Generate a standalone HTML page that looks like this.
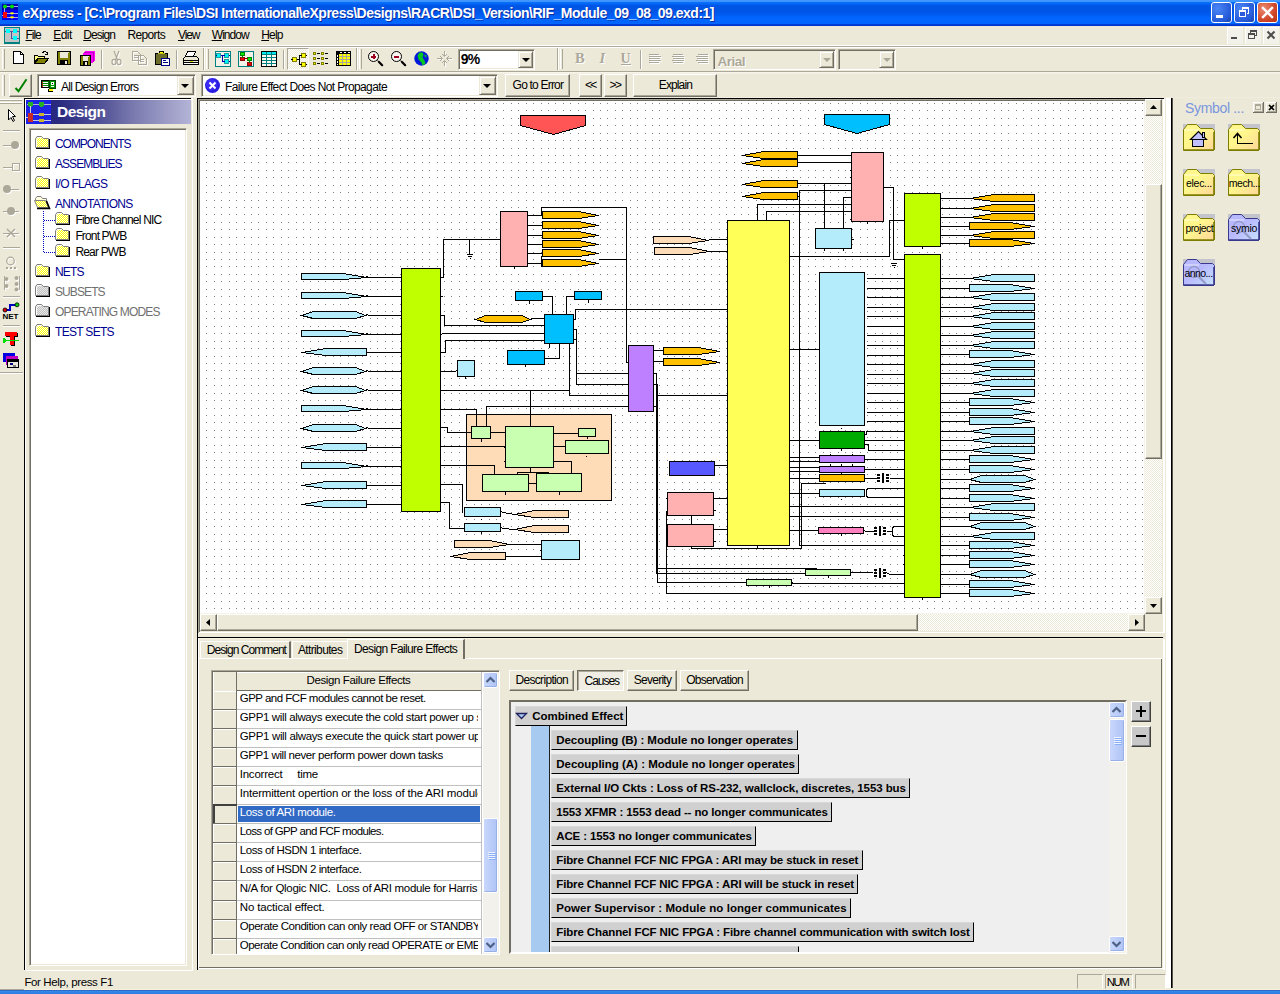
<!DOCTYPE html>
<html><head><meta charset="utf-8"><title>eXpress</title>
<style>
html,body{margin:0;padding:0;}
body{width:1280px;height:994px;overflow:hidden;background:#ECE9D8;font-family:"Liberation Sans",sans-serif;font-size:12px;color:#000;position:relative;}
.abs{position:absolute;}
.t{position:absolute;white-space:nowrap;line-height:1;}
#title{position:absolute;left:0;top:0;width:1280px;height:26px;background:linear-gradient(to bottom,#4297FF 0px,#3C93FF 2px,#0A6EFC 2.5px,#0066F8 4px,#005AEA 5px,#0055E5 6px,#0055E5 11px,#0058EC 13px,#005CF2 15px,#0064FC 17px,#0066FF 18px,#0066FF 23.5px,#0040D8 24.5px,#0030C8 26px);}
#title .txt{left:22px;top:5px;color:#fff;font-weight:bold;font-size:14px;letter-spacing:-0.2px;text-shadow:1px 1px 0 #0A1883;}
.wb{position:absolute;top:2px;width:21px;height:21px;border-radius:3px;border:1px solid #fff;box-sizing:border-box;background:radial-gradient(circle at 30% 30%,#4A86F5,#2459D8 70%,#1941A5);}
.wb.close{background:radial-gradient(circle at 30% 30%,#EB8C71,#D1482A 60%,#B3330F);}
#menubar{position:absolute;left:0;top:25px;width:1280px;height:21px;background:#ECE9D8;}
.menu{position:absolute;top:30px;font-size:12px;line-height:1;white-space:nowrap;}
.menu u{text-decoration:underline;}
.hsep{position:absolute;left:0;width:1280px;height:1px;}
.raisedbtn{position:absolute;box-sizing:border-box;background:#ECE9D8;border:1px solid;border-color:#fff #716F64 #716F64 #fff;box-shadow:inset -1px -1px 0 #ACA899;}
.sunken{position:absolute;box-sizing:border-box;background:#fff;border:1px solid;border-color:#ACA899 #fff #fff #ACA899;box-shadow:inset 1px 1px 0 #716F64, inset -1px -1px 0 #ECE9D8;}
.combo-btn{position:absolute;box-sizing:border-box;background:#ECE9D8;border:1px solid;border-color:#ECE9D8 #716F64 #716F64 #ECE9D8;box-shadow:inset 1px 1px 0 #fff, inset -1px -1px 0 #ACA899;}
.arrow-d{position:absolute;width:0;height:0;border-left:4px solid transparent;border-right:4px solid transparent;border-top:4px solid #000;}
.vsep{position:absolute;width:2px;border-left:1px solid #ACA899;border-right:1px solid #fff;box-sizing:border-box;}
.grip{position:absolute;width:3px;border-left:1px solid #fff;border-right:1px solid #ACA899;box-sizing:border-box;}
.dither{background-image:conic-gradient(#fff 25%,#ECE9D8 0 50%,#fff 0 75%,#ECE9D8 0);background-size:2px 2px;}
.tree{font-size:12px;}
.grid{font-size:11.5px;letter-spacing:-0.1px;}
.tab{box-sizing:border-box;border-right:2px solid #716F64;border-left:1px solid #fff;border-top:1px solid #fff;background:#ECE9D8;}
.tab.act{border-top:1px solid #fff;border-left:1px solid #fff;border-right:2px solid #716F64;}
.subtab{box-sizing:border-box;background:#ECE9D8;border:1px solid;border-color:#fff #716F64 #716F64 #fff;box-shadow:inset -1px -1px 0 #ACA899, inset 1px 1px 0 #ECE9D8;}
.subtab.act{border-color:#716F64 #fff #fff #716F64;box-shadow:inset 1px 1px 0 #ACA899;background:#F0EEE4;}
.cz{box-sizing:border-box;background:#D0D0D0;border:1px solid;border-color:#D8D8D8 #000 #000 #D8D8D8;}
.cb{font-size:12px;font-weight:bold;letter-spacing:-0.05px;}
.xpbtn{box-sizing:border-box;border:1px solid #fff;border-radius:2px;background:linear-gradient(to right,#C9D7FC,#BBCDF9 50%,#B0C4F5);box-shadow:inset -1px -1px 0 #98B0E8;}
.pm{box-sizing:border-box;background:#C8C8C8;border:1px solid;border-color:#fff #404040 #404040 #fff;box-shadow:inset -1px -1px 0 #808080;}

</style></head>
<body>
<div id="title"></div>
<div class="t" style="left:22.5px;top:6.45px;font-size:14px;letter-spacing:-0.498px;font-weight:bold;color:#fff;text-shadow:1px 1px 0 #0A2A9C;">eXpress - [C:\Program Files\DSI International\eXpress\Designs\RACR\DSI_Version\RIF_Module_09_08_09.exd:1]</div>
<div class="wb" style="left:1211px;"></div>
<div class="wb" style="left:1234px;"></div>
<div class="wb close" style="left:1257px;"></div>
<div class="t" style="left:25.5px;top:28.94px;font-size:12px;letter-spacing:-1.023px;"><u>F</u>ile</div>
<div class="t" style="left:53.25px;top:28.94px;font-size:12px;letter-spacing:-0.547px;"><u>E</u>dit</div>
<div class="t" style="left:83.25px;top:28.94px;font-size:12px;letter-spacing:-0.935px;"><u>D</u>esign</div>
<div class="t" style="left:127.5px;top:28.94px;font-size:12px;letter-spacing:-0.647px;">Reports</div>
<div class="t" style="left:178px;top:28.94px;font-size:12px;letter-spacing:-1.137px;"><u>V</u>iew</div>
<div class="t" style="left:211.75px;top:28.94px;font-size:12px;letter-spacing:-0.948px;"><u>W</u>indow</div>
<div class="t" style="left:261.25px;top:28.94px;font-size:12px;letter-spacing:-0.859px;"><u>H</u>elp</div>
<div class="abs" style="left:0px;top:45px;width:1280px;height:1px;background:#fff;"></div>
<div class="abs" style="left:0px;top:46px;width:1280px;height:1px;background:#ACA899;"></div>
<div class="abs" style="left:0px;top:47px;width:1280px;height:1px;background:#fff;"></div>
<div class="grip" style="left:2px;top:49px;width:3px;height:20px;"></div>
<div class="vsep" style="left:101px;top:50px;width:2px;height:19px;"></div>
<div class="vsep" style="left:176px;top:50px;width:2px;height:19px;"></div>
<div class="vsep" style="left:203px;top:48px;width:2px;height:22px;"></div>
<div class="grip" style="left:206px;top:49px;width:3px;height:20px;"></div>
<div class="vsep" style="left:283px;top:50px;width:2px;height:19px;"></div>
<div class="abs dither" style="left:287px;top:48px;width:22px;height:22px;border:1px solid;border-color:#ACA899 #fff #fff #ACA899;box-sizing:border-box;"></div>
<div class="vsep" style="left:356px;top:48px;width:2px;height:22px;"></div>
<div class="grip" style="left:359px;top:49px;width:3px;height:20px;"></div>
<div class="sunken" style="left:458px;top:49px;width:77px;height:21px;"></div>
<div class="t" style="left:460.8px;top:52.45px;font-size:14px;letter-spacing:-0.817px;font-weight:bold;">9%</div>
<div class="combo-btn" style="left:518px;top:51px;width:15px;height:17px;"></div>
<div class="arrow-d" style="left:522px;top:58px;width:0px;height:0px;"></div>
<div class="vsep" style="left:557px;top:48px;width:2px;height:22px;"></div>
<div class="grip" style="left:560px;top:49px;width:3px;height:20px;"></div>
<div class="sunken" style="left:713px;top:49px;width:123px;height:21px;background:#ECE9D8;"></div>
<div class="t" style="left:717.5px;top:54.57px;font-size:13.5px;letter-spacing:-0.503px;font-weight:bold;color:#ACA899;text-shadow:1px 1px 0 #fff;">Arial</div>
<div class="combo-btn" style="left:819px;top:51px;width:15px;height:17px;"></div>
<div class="arrow-d" style="left:823px;top:58px;width:0px;height:0px;border-top-color:#ACA899;"></div>
<div class="sunken" style="left:838px;top:49px;width:58px;height:21px;background:#ECE9D8;"></div>
<div class="combo-btn" style="left:879px;top:51px;width:15px;height:17px;"></div>
<div class="arrow-d" style="left:883px;top:58px;width:0px;height:0px;border-top-color:#ACA899;"></div>
<div class="abs" style="left:0px;top:71px;width:1280px;height:1px;background:#ACA899;"></div>
<div class="abs" style="left:0px;top:72px;width:1280px;height:1px;background:#F8F5EA;"></div>
<div class="abs" style="left:0px;top:73px;width:1280px;height:1px;background:#F2EFE2;"></div>
<div class="grip" style="left:2px;top:75px;width:3px;height:21px;"></div>
<div class="raisedbtn" style="left:9px;top:74px;width:23px;height:23px;"></div>
<div class="sunken" style="left:37px;top:74px;width:159px;height:23px;"></div>
<div class="t" style="left:61px;top:81.04px;font-size:12px;letter-spacing:-0.752px;">All Design Errors</div>
<div class="combo-btn" style="left:177px;top:76px;width:17px;height:19px;"></div>
<div class="arrow-d" style="left:181px;top:84px;width:0px;height:0px;"></div>
<div class="sunken" style="left:201px;top:74px;width:297px;height:23px;"></div>
<div class="t" style="left:225px;top:81.04px;font-size:12px;letter-spacing:-0.623px;">Failure Effect Does Not Propagate</div>
<div class="combo-btn" style="left:479px;top:76px;width:17px;height:19px;"></div>
<div class="arrow-d" style="left:483px;top:84px;width:0px;height:0px;"></div>
<div class="raisedbtn" style="left:505px;top:74px;width:65px;height:23px;"></div>
<div class="t" style="left:512.6px;top:79.34px;font-size:12px;letter-spacing:-0.796px;">Go to Error</div>
<div class="raisedbtn" style="left:579px;top:74px;width:23px;height:23px;"></div>
<div class="t" style="left:584.9px;top:79.34px;font-size:12px;letter-spacing:-1.558px;">&lt;&lt;</div>
<div class="raisedbtn" style="left:604px;top:74px;width:23px;height:23px;"></div>
<div class="t" style="left:609.6px;top:79.34px;font-size:12px;letter-spacing:-1.558px;">&gt;&gt;</div>
<div class="raisedbtn" style="left:633px;top:74px;width:84px;height:23px;"></div>
<div class="t" style="left:658.8px;top:79.34px;font-size:12px;letter-spacing:-0.880px;">Explain</div>
<div class="abs" style="left:0px;top:97px;width:1280px;height:1px;background:#F0EDDE;"></div>
<div class="abs" style="left:24px;top:98px;width:167px;height:1px;background:#000;"></div>
<div class="abs" style="left:24px;top:98px;width:1px;height:872px;background:#000;"></div>
<div class="abs" style="left:25px;top:99px;width:167px;height:1px;background:#fff;"></div>
<div class="abs" style="left:25px;top:99px;width:1px;height:871px;background:#fff;"></div>
<div class="abs" style="left:26px;top:970px;width:167px;height:1px;background:#fff;"></div>
<div class="abs" style="left:192px;top:98px;width:1px;height:872px;background:#fff;"></div>
<div class="abs" style="left:26px;top:100px;width:165px;height:24px;background:linear-gradient(to right,#22227A 0%,#2A2A80 20%,#3C3C8C 32%,#5A5A9C 50%,#7878AE 64%,#8C8CBC 76%,#A0A0C8 88%,#B4B4D8 100%);"></div>
<div class="t" style="left:57px;top:104.38px;font-size:15.5px;letter-spacing:-0.531px;font-weight:bold;color:#fff;">Design</div>
<div class="sunken" style="left:29px;top:128px;width:158px;height:838px;"></div>
<div class="t" style="left:55px;top:138.34px;font-size:12px;letter-spacing:-1.052px;color:#000090;">COMPONENTS</div>
<div class="t" style="left:55px;top:158.34px;font-size:12px;letter-spacing:-0.953px;color:#000090;">ASSEMBLIES</div>
<div class="t" style="left:55px;top:178.34px;font-size:12px;letter-spacing:-0.710px;color:#000090;">I/O FLAGS</div>
<div class="t" style="left:55px;top:198.34px;font-size:12px;letter-spacing:-0.654px;color:#000090;">ANNOTATIONS</div>
<div class="t" style="left:75.4px;top:214.34px;font-size:12px;letter-spacing:-0.781px;">Fibre Channel NIC</div>
<div class="t" style="left:75.4px;top:230.34px;font-size:12px;letter-spacing:-0.854px;">Front PWB</div>
<div class="t" style="left:75.4px;top:246.34px;font-size:12px;letter-spacing:-0.811px;">Rear PWB</div>
<div class="t" style="left:55px;top:266.34px;font-size:12px;letter-spacing:-0.804px;color:#000090;">NETS</div>
<div class="t" style="left:55px;top:286.34px;font-size:12px;letter-spacing:-0.902px;color:#707070;">SUBSETS</div>
<div class="t" style="left:55px;top:306.34px;font-size:12px;letter-spacing:-0.828px;color:#707070;">OPERATING MODES</div>
<div class="t" style="left:55px;top:326.34px;font-size:12px;letter-spacing:-0.693px;color:#000090;">TEST SETS</div>
<div class="abs" style="left:197px;top:98px;width:967px;height:1px;background:#000;"></div>
<div class="abs" style="left:197px;top:99px;width:1px;height:871px;background:#000;"></div>
<div class="abs" style="left:198px;top:99px;width:1px;height:534px;background:#ACA899;"></div>
<div class="abs" style="left:198px;top:99px;width:947px;height:1px;background:#ACA899;"></div>
<div class="abs" style="left:199px;top:100px;width:946px;height:1px;background:#716F64;"></div>
<div class="abs" style="left:199px;top:100px;width:1px;height:532px;background:#716F64;"></div>
<div class="abs" style="left:200px;top:101px;width:945px;height:513px;background:#F6F4EA;overflow:hidden;"><div class="abs" style="left:0;top:0;width:944px;height:512px;background:#fff;"></div><svg width="944" height="512" viewBox="200 101 944 512" shape-rendering="crispEdges" style="position:absolute;left:0;top:0;"><defs><clipPath id="dc"><rect x="206" y="101" width="1" height="512"/><rect x="214" y="101" width="1" height="512"/><rect x="221" y="101" width="1" height="512"/><rect x="229" y="101" width="1" height="512"/><rect x="236" y="101" width="1" height="512"/><rect x="244" y="101" width="1" height="512"/><rect x="251" y="101" width="1" height="512"/><rect x="258" y="101" width="1" height="512"/><rect x="266" y="101" width="1" height="512"/><rect x="273" y="101" width="1" height="512"/><rect x="281" y="101" width="1" height="512"/><rect x="288" y="101" width="1" height="512"/><rect x="296" y="101" width="1" height="512"/><rect x="303" y="101" width="1" height="512"/><rect x="310" y="101" width="1" height="512"/><rect x="318" y="101" width="1" height="512"/><rect x="325" y="101" width="1" height="512"/><rect x="333" y="101" width="1" height="512"/><rect x="340" y="101" width="1" height="512"/><rect x="348" y="101" width="1" height="512"/><rect x="355" y="101" width="1" height="512"/><rect x="362" y="101" width="1" height="512"/><rect x="370" y="101" width="1" height="512"/><rect x="377" y="101" width="1" height="512"/><rect x="385" y="101" width="1" height="512"/><rect x="392" y="101" width="1" height="512"/><rect x="400" y="101" width="1" height="512"/><rect x="407" y="101" width="1" height="512"/><rect x="414" y="101" width="1" height="512"/><rect x="422" y="101" width="1" height="512"/><rect x="429" y="101" width="1" height="512"/><rect x="437" y="101" width="1" height="512"/><rect x="444" y="101" width="1" height="512"/><rect x="451" y="101" width="1" height="512"/><rect x="459" y="101" width="1" height="512"/><rect x="466" y="101" width="1" height="512"/><rect x="474" y="101" width="1" height="512"/><rect x="481" y="101" width="1" height="512"/><rect x="489" y="101" width="1" height="512"/><rect x="496" y="101" width="1" height="512"/><rect x="503" y="101" width="1" height="512"/><rect x="511" y="101" width="1" height="512"/><rect x="518" y="101" width="1" height="512"/><rect x="526" y="101" width="1" height="512"/><rect x="533" y="101" width="1" height="512"/><rect x="541" y="101" width="1" height="512"/><rect x="548" y="101" width="1" height="512"/><rect x="555" y="101" width="1" height="512"/><rect x="563" y="101" width="1" height="512"/><rect x="570" y="101" width="1" height="512"/><rect x="578" y="101" width="1" height="512"/><rect x="585" y="101" width="1" height="512"/><rect x="593" y="101" width="1" height="512"/><rect x="600" y="101" width="1" height="512"/><rect x="607" y="101" width="1" height="512"/><rect x="615" y="101" width="1" height="512"/><rect x="622" y="101" width="1" height="512"/><rect x="630" y="101" width="1" height="512"/><rect x="637" y="101" width="1" height="512"/><rect x="645" y="101" width="1" height="512"/><rect x="652" y="101" width="1" height="512"/><rect x="659" y="101" width="1" height="512"/><rect x="667" y="101" width="1" height="512"/><rect x="674" y="101" width="1" height="512"/><rect x="682" y="101" width="1" height="512"/><rect x="689" y="101" width="1" height="512"/><rect x="697" y="101" width="1" height="512"/><rect x="704" y="101" width="1" height="512"/><rect x="711" y="101" width="1" height="512"/><rect x="719" y="101" width="1" height="512"/><rect x="726" y="101" width="1" height="512"/><rect x="734" y="101" width="1" height="512"/><rect x="741" y="101" width="1" height="512"/><rect x="748" y="101" width="1" height="512"/><rect x="756" y="101" width="1" height="512"/><rect x="763" y="101" width="1" height="512"/><rect x="771" y="101" width="1" height="512"/><rect x="778" y="101" width="1" height="512"/><rect x="786" y="101" width="1" height="512"/><rect x="793" y="101" width="1" height="512"/><rect x="800" y="101" width="1" height="512"/><rect x="808" y="101" width="1" height="512"/><rect x="815" y="101" width="1" height="512"/><rect x="823" y="101" width="1" height="512"/><rect x="830" y="101" width="1" height="512"/><rect x="838" y="101" width="1" height="512"/><rect x="845" y="101" width="1" height="512"/><rect x="852" y="101" width="1" height="512"/><rect x="860" y="101" width="1" height="512"/><rect x="867" y="101" width="1" height="512"/><rect x="875" y="101" width="1" height="512"/><rect x="882" y="101" width="1" height="512"/><rect x="890" y="101" width="1" height="512"/><rect x="897" y="101" width="1" height="512"/><rect x="904" y="101" width="1" height="512"/><rect x="912" y="101" width="1" height="512"/><rect x="919" y="101" width="1" height="512"/><rect x="927" y="101" width="1" height="512"/><rect x="934" y="101" width="1" height="512"/><rect x="942" y="101" width="1" height="512"/><rect x="949" y="101" width="1" height="512"/><rect x="956" y="101" width="1" height="512"/><rect x="964" y="101" width="1" height="512"/><rect x="971" y="101" width="1" height="512"/><rect x="979" y="101" width="1" height="512"/><rect x="986" y="101" width="1" height="512"/><rect x="994" y="101" width="1" height="512"/><rect x="1001" y="101" width="1" height="512"/><rect x="1008" y="101" width="1" height="512"/><rect x="1016" y="101" width="1" height="512"/><rect x="1023" y="101" width="1" height="512"/><rect x="1031" y="101" width="1" height="512"/><rect x="1038" y="101" width="1" height="512"/><rect x="1045" y="101" width="1" height="512"/><rect x="1053" y="101" width="1" height="512"/><rect x="1060" y="101" width="1" height="512"/><rect x="1068" y="101" width="1" height="512"/><rect x="1075" y="101" width="1" height="512"/><rect x="1083" y="101" width="1" height="512"/><rect x="1090" y="101" width="1" height="512"/><rect x="1097" y="101" width="1" height="512"/><rect x="1105" y="101" width="1" height="512"/><rect x="1112" y="101" width="1" height="512"/><rect x="1120" y="101" width="1" height="512"/><rect x="1127" y="101" width="1" height="512"/><rect x="1135" y="101" width="1" height="512"/><rect x="1142" y="101" width="1" height="512"/></clipPath></defs><g clip-path="url(#dc)"><path d="M200,103.5H1145M200,110.5H1145M200,118.5H1145M200,125.5H1145M200,133.5H1145M200,140.5H1145M200,148.5H1145M200,155.5H1145M200,162.5H1145M200,170.5H1145M200,177.5H1145M200,185.5H1145M200,192.5H1145M200,200.5H1145M200,207.5H1145M200,214.5H1145M200,222.5H1145M200,229.5H1145M200,237.5H1145M200,244.5H1145M200,252.5H1145M200,259.5H1145M200,266.5H1145M200,274.5H1145M200,281.5H1145M200,289.5H1145M200,296.5H1145M200,304.5H1145M200,311.5H1145M200,318.5H1145M200,326.5H1145M200,333.5H1145M200,341.5H1145M200,348.5H1145M200,356.5H1145M200,363.5H1145M200,370.5H1145M200,378.5H1145M200,385.5H1145M200,393.5H1145M200,400.5H1145M200,408.5H1145M200,415.5H1145M200,422.5H1145M200,430.5H1145M200,437.5H1145M200,445.5H1145M200,452.5H1145M200,460.5H1145M200,467.5H1145M200,474.5H1145M200,482.5H1145M200,489.5H1145M200,497.5H1145M200,504.5H1145M200,512.5H1145M200,519.5H1145M200,526.5H1145M200,534.5H1145M200,541.5H1145M200,549.5H1145M200,556.5H1145M200,564.5H1145M200,571.5H1145M200,578.5H1145M200,586.5H1145M200,593.5H1145M200,601.5H1145M200,608.5H1145" stroke="#808080" stroke-width="1" fill="none"/></g><path d="M520.5,115.5 L585.5,115.5 L585.5,125.5 L553.5,134.5 L520.5,125.5 Z" fill="#FF5555" stroke="#000" stroke-width="1"/>
<path d="M824.5,114.5 L889.5,114.5 L889.5,124.5 L857,133.5 L824.5,124.5 Z" fill="#00BFFF" stroke="#000" stroke-width="1"/>
<path d="M301.5,273.5 L343.5,273.5 L366.5,277.5 L343.5,279.5 L301.5,279.5 Z" fill="#B4ECFC" stroke="#000" stroke-width="1"/>
<path d="M366.5,276.5 L368.5,277.5 L401.5,277.5" fill="none" stroke="#000" stroke-width="1"/>
<path d="M301.5,292.5 L343.5,292.5 L366.5,296.5 L343.5,298.5 L301.5,298.5 Z" fill="#B4ECFC" stroke="#000" stroke-width="1"/>
<path d="M366.5,295.5 L368.5,296.5 L401.5,296.5" fill="none" stroke="#000" stroke-width="1"/>
<path d="M301.5,315.5 L313.5,311.5 L355.5,311.5 L365.5,315.5 L355.5,318.5 L313.5,318.5 Z" fill="#B4ECFC" stroke="#000" stroke-width="1"/>
<path d="M365.5,315.5 L367.5,314.5 L368.5,315.5 L401.5,315.5" fill="none" stroke="#000" stroke-width="1"/>
<path d="M301.5,330.5 L343.5,330.5 L366.5,334.5 L343.5,336.5 L301.5,336.5 Z" fill="#B4ECFC" stroke="#000" stroke-width="1"/>
<path d="M366.5,333.5 L368.5,334.5 L401.5,334.5" fill="none" stroke="#000" stroke-width="1"/>
<path d="M366.5,348.5 L326.5,348.5 L301.5,352.5 L326.5,355.5 L366.5,355.5 Z" fill="#B4ECFC" stroke="#000" stroke-width="1"/>
<path d="M366.5,352.5 L401.5,352.5" fill="none" stroke="#000" stroke-width="1"/>
<path d="M301.5,371.5 L313.5,367.5 L355.5,367.5 L365.5,371.5 L355.5,374.5 L313.5,374.5 Z" fill="#B4ECFC" stroke="#000" stroke-width="1"/>
<path d="M365.5,371.5 L367.5,370.5 L368.5,371.5 L401.5,371.5" fill="none" stroke="#000" stroke-width="1"/>
<path d="M301.5,390.5 L313.5,386.5 L355.5,386.5 L365.5,390.5 L355.5,393.5 L313.5,393.5 Z" fill="#B4ECFC" stroke="#000" stroke-width="1"/>
<path d="M365.5,390.5 L367.5,389.5 L368.5,390.5 L401.5,390.5" fill="none" stroke="#000" stroke-width="1"/>
<path d="M301.5,405.5 L343.5,405.5 L366.5,409.5 L343.5,411.5 L301.5,411.5 Z" fill="#B4ECFC" stroke="#000" stroke-width="1"/>
<path d="M366.5,408.5 L368.5,409.5 L401.5,409.5" fill="none" stroke="#000" stroke-width="1"/>
<path d="M301.5,428.5 L313.5,424.5 L355.5,424.5 L365.5,428.5 L355.5,431.5 L313.5,431.5 Z" fill="#B4ECFC" stroke="#000" stroke-width="1"/>
<path d="M365.5,428.5 L367.5,427.5 L368.5,428.5 L401.5,428.5" fill="none" stroke="#000" stroke-width="1"/>
<path d="M366.5,443.5 L326.5,443.5 L301.5,447.5 L326.5,450.5 L366.5,450.5 Z" fill="#B4ECFC" stroke="#000" stroke-width="1"/>
<path d="M366.5,447.5 L401.5,447.5" fill="none" stroke="#000" stroke-width="1"/>
<path d="M301.5,462.5 L343.5,462.5 L366.5,466.5 L343.5,468.5 L301.5,468.5 Z" fill="#B4ECFC" stroke="#000" stroke-width="1"/>
<path d="M366.5,465.5 L368.5,466.5 L401.5,466.5" fill="none" stroke="#000" stroke-width="1"/>
<path d="M366.5,481.5 L326.5,481.5 L301.5,485.5 L326.5,488.5 L366.5,488.5 Z" fill="#B4ECFC" stroke="#000" stroke-width="1"/>
<path d="M366.5,485.5 L401.5,485.5" fill="none" stroke="#000" stroke-width="1"/>
<path d="M366.5,500.5 L326.5,500.5 L301.5,504.5 L326.5,507.5 L366.5,507.5 Z" fill="#B4ECFC" stroke="#000" stroke-width="1"/>
<path d="M366.5,504.5 L401.5,504.5" fill="none" stroke="#000" stroke-width="1"/>
<rect x="401.5" y="268.5" width="39" height="243" fill="#BFFF00" stroke="#000"/>
<path d="M440.5,277.5 L443.5,277.5 L443.5,239.5 L500.5,239.5" fill="none" stroke="#000" stroke-width="1"/>
<path d="M469.5,239.5 L469.5,254.5" fill="none" stroke="#000" stroke-width="1"/>
<path d="M466.5,254.5 L472.5,254.5" fill="none" stroke="#000" stroke-width="1"/>
<path d="M467.5,256.5 L471.5,256.5" fill="none" stroke="#000" stroke-width="1"/>
<path d="M469.5,258.5 L470.5,258.5" fill="none" stroke="#000" stroke-width="1"/>
<rect x="500.5" y="211.5" width="27" height="55" fill="#FFB0B0" stroke="#000"/>
<path d="M514.5,266.5 L514.5,268.5" fill="none" stroke="#000" stroke-width="1"/>
<path d="M527.5,215.5 L542.5,215.5" fill="none" stroke="#000" stroke-width="1"/>
<path d="M542.5,211.5 L578.5,211.5 L598.5,215.5 L578.5,218.5 L542.5,218.5 Z" fill="#FFC000" stroke="#000" stroke-width="1"/>
<path d="M527.5,225.5 L542.5,225.5" fill="none" stroke="#000" stroke-width="1"/>
<path d="M542.5,221.5 L578.5,221.5 L598.5,225.5 L578.5,228.5 L542.5,228.5 Z" fill="#FFC000" stroke="#000" stroke-width="1"/>
<path d="M527.5,235.5 L542.5,235.5" fill="none" stroke="#000" stroke-width="1"/>
<path d="M542.5,231.5 L578.5,231.5 L598.5,235.5 L578.5,238.5 L542.5,238.5 Z" fill="#FFC000" stroke="#000" stroke-width="1"/>
<path d="M527.5,244.5 L542.5,244.5" fill="none" stroke="#000" stroke-width="1"/>
<path d="M542.5,240.5 L578.5,240.5 L598.5,244.5 L578.5,247.5 L542.5,247.5 Z" fill="#FFC000" stroke="#000" stroke-width="1"/>
<path d="M527.5,253.5 L542.5,253.5" fill="none" stroke="#000" stroke-width="1"/>
<path d="M542.5,249.5 L578.5,249.5 L598.5,253.5 L578.5,256.5 L542.5,256.5 Z" fill="#FFC000" stroke="#000" stroke-width="1"/>
<path d="M527.5,263.5 L542.5,263.5" fill="none" stroke="#000" stroke-width="1"/>
<path d="M542.5,259.5 L578.5,259.5 L598.5,263.5 L578.5,266.5 L542.5,266.5 Z" fill="#FFC000" stroke="#000" stroke-width="1"/>
<path d="M541.5,215.5 L541.5,207.5 L626.5,207.5 L626.5,362.5 L628.5,362.5" fill="none" stroke="#000" stroke-width="1"/>
<path d="M598.5,259.5 L626.5,259.5" fill="none" stroke="#000" stroke-width="1"/>
<path d="M541.5,255.5 L541.5,266.5" fill="none" stroke="#000" stroke-width="1"/>
<path d="M440.5,296.5 L442.5,296.5" fill="none" stroke="#000" stroke-width="1"/>
<rect x="515.5" y="291.5" width="27" height="9" fill="#00BFFF" stroke="#000"/>
<path d="M529.5,300.5 L529.5,303.5" fill="none" stroke="#000" stroke-width="1"/>
<rect x="574.5" y="291.5" width="27" height="8" fill="#00BFFF" stroke="#000"/>
<path d="M588.5,299.5 L588.5,302.5" fill="none" stroke="#000" stroke-width="1"/>
<path d="M542.5,296.5 L552.5,296.5 L552.5,314.5" fill="none" stroke="#000" stroke-width="1"/>
<path d="M574.5,296.5 L566.5,296.5 L566.5,314.5" fill="none" stroke="#000" stroke-width="1"/>
<path d="M475.5,319.5 L485.5,315.5 L521.5,315.5 L530.5,319.5 L521.5,322.5 L485.5,322.5 Z" fill="#FFC000" stroke="#000" stroke-width="1"/>
<path d="M530.5,318.5 L544.5,318.5" fill="none" stroke="#000" stroke-width="1"/>
<path d="M440.5,315.5 L444.5,315.5 L444.5,325.5 L544.5,325.5" fill="none" stroke="#000" stroke-width="1"/>
<path d="M440.5,334.5 L443.5,333.5 L544.5,333.5" fill="none" stroke="#000" stroke-width="1"/>
<path d="M440.5,352.5 L445.5,352.5 L445.5,340.5 L544.5,340.5" fill="none" stroke="#000" stroke-width="1"/>
<path d="M540.5,318.5 L544.5,318.5" fill="none" stroke="#000" stroke-width="1"/>
<rect x="544.5" y="314.5" width="29" height="29" fill="#00BFFF" stroke="#000"/>
<path d="M549.5,343.5 L549.5,347.5" fill="none" stroke="#000" stroke-width="1"/>
<rect x="507.5" y="350.5" width="37" height="14" fill="#00BFFF" stroke="#000"/>
<path d="M525.5,364.5 L525.5,366.5" fill="none" stroke="#000" stroke-width="1"/>
<path d="M544.5,358.5 L559.5,358.5 L559.5,343.5" fill="none" stroke="#000" stroke-width="1"/>
<rect x="457.5" y="360.5" width="17" height="16" fill="#B4ECFC" stroke="#000"/>
<path d="M465.5,376.5 L465.5,378.5" fill="none" stroke="#000" stroke-width="1"/>
<path d="M440.5,371.5 L455.5,371.5 L457.5,369.5" fill="none" stroke="#000" stroke-width="1"/>
<path d="M573.5,319.5 L575.5,319.5 L575.5,309.5 L727.5,309.5" fill="none" stroke="#000" stroke-width="1"/>
<path d="M573.5,329.5 L576.5,329.5 L576.5,384.5 L628.5,384.5" fill="none" stroke="#000" stroke-width="1"/>
<path d="M573.5,339.5 L576.5,339.5" fill="none" stroke="#000" stroke-width="1"/>
<path d="M576.5,373.5 L628.5,373.5" fill="none" stroke="#000" stroke-width="1"/>
<path d="M569.5,343.5 L569.5,395.5 L628.5,395.5" fill="none" stroke="#000" stroke-width="1"/>
<path d="M440.5,390.5 L569.5,390.5" fill="none" stroke="#000" stroke-width="1"/>
<path d="M626.5,207.5 L626.5,362.5" fill="none" stroke="#000" stroke-width="1"/>
<path d="M530.5,390.5 L530.5,426.5" fill="none" stroke="#000" stroke-width="1"/>
<path d="M440.5,409.5 L476.5,409.5 L476.5,426.5" fill="none" stroke="#000" stroke-width="1"/>
<path d="M628.5,406.5 L486.5,406.5 L486.5,426.5" fill="none" stroke="#000" stroke-width="1"/>
<rect x="628.5" y="345.5" width="25" height="66" fill="#BF80FF" stroke="#000"/>
<path d="M653.5,350.5 L663.5,350.5" fill="none" stroke="#000" stroke-width="1"/>
<path d="M653.5,361.5 L663.5,361.5" fill="none" stroke="#000" stroke-width="1"/>
<path d="M663.5,347.5 L698.5,347.5 L719.5,351.5 L698.5,354.5 L663.5,354.5 Z" fill="#FFC000" stroke="#000" stroke-width="1"/>
<path d="M663.5,358.5 L698.5,358.5 L719.5,362.5 L698.5,365.5 L663.5,365.5 Z" fill="#FFC000" stroke="#000" stroke-width="1"/>
<path d="M653.5,373.5 L656.5,373.5 L656.5,406.5 L653.5,406.5" fill="none" stroke="#000" stroke-width="1"/>
<path d="M653.5,384.5 L657.5,384.5" fill="none" stroke="#000" stroke-width="1"/>
<path d="M657.5,395.5 L727.5,395.5" fill="none" stroke="#000" stroke-width="1"/>
<path d="M657,384 V574" fill="none" stroke="#000" stroke-width="2"/>
<rect x="466.5" y="414.5" width="145" height="86" fill="#FFDCB8" stroke="#000"/>
<path d="M530.5,414.5 L530.5,426.5" fill="none" stroke="#000" stroke-width="1"/>
<path d="M476.5,414.5 L476.5,426.5" fill="none" stroke="#000" stroke-width="1"/>
<path d="M486.5,414.5 L486.5,426.5" fill="none" stroke="#000" stroke-width="1"/>
<rect x="471.5" y="426.5" width="19" height="12" fill="#C8FFB0" stroke="#000"/>
<path d="M481.5,438.5 L481.5,441.5" fill="none" stroke="#000" stroke-width="1"/>
<rect x="505.5" y="426.5" width="48" height="41" fill="#C8FFB0" stroke="#000"/>
<rect x="578.5" y="428.5" width="17" height="8" fill="#C8FFB0" stroke="#000"/>
<path d="M587.5,436.5 L587.5,438.5" fill="none" stroke="#000" stroke-width="1"/>
<rect x="565.5" y="440.5" width="43" height="13" fill="#C8FFB0" stroke="#000"/>
<path d="M586.5,455.5 L586.5,456.5" fill="none" stroke="#000" stroke-width="1"/>
<rect x="482.5" y="474.5" width="46" height="17" fill="#C8FFB0" stroke="#000"/>
<path d="M505.5,491.5 L505.5,494.5" fill="none" stroke="#000" stroke-width="1"/>
<rect x="536.5" y="473.5" width="45" height="18" fill="#C8FFB0" stroke="#000"/>
<path d="M559.5,491.5 L559.5,494.5" fill="none" stroke="#000" stroke-width="1"/>
<path d="M440.5,427.5 L447.5,427.5 L447.5,432.5 L471.5,432.5" fill="none" stroke="#000" stroke-width="1"/>
<path d="M490.5,432.5 L505.5,432.5" fill="none" stroke="#000" stroke-width="1"/>
<path d="M440.5,446.5 L503.5,446.5 L505.5,447.5" fill="none" stroke="#000" stroke-width="1"/>
<path d="M503.5,461.5 L505.5,461.5" fill="none" stroke="#000" stroke-width="1"/>
<path d="M440.5,465.5 L494.5,465.5 L494.5,474.5" fill="none" stroke="#000" stroke-width="1"/>
<path d="M553.5,433.5 L578.5,433.5" fill="none" stroke="#000" stroke-width="1"/>
<path d="M553.5,446.5 L565.5,446.5" fill="none" stroke="#000" stroke-width="1"/>
<path d="M553.5,461.5 L571.5,461.5 L571.5,473.5" fill="none" stroke="#000" stroke-width="1"/>
<path d="M530.5,467.5 L530.5,472.5" fill="none" stroke="#000" stroke-width="1"/>
<path d="M517.5,474.5 L517.5,472.5 L548.5,472.5" fill="none" stroke="#000" stroke-width="1"/>
<path d="M528.5,483.5 L536.5,483.5" fill="none" stroke="#000" stroke-width="1"/>
<path d="M440.5,484.5 L462.5,484.5 L462.5,512.5" fill="none" stroke="#000" stroke-width="1"/>
<path d="M440.5,502.5 L449.5,502.5 L449.5,528.5 L463.5,528.5" fill="none" stroke="#000" stroke-width="1"/>
<rect x="464.5" y="507.5" width="36" height="9" fill="#B4ECFC" stroke="#000"/>
<path d="M481.5,518.5 L481.5,519.5" fill="none" stroke="#000" stroke-width="1"/>
<rect x="464.5" y="523.5" width="36" height="8" fill="#B4ECFC" stroke="#000"/>
<path d="M481.5,531.5 L481.5,533.5" fill="none" stroke="#000" stroke-width="1"/>
<path d="M500.5,511.5 L503.5,512.5 L514.5,514.5" fill="none" stroke="#000" stroke-width="1"/>
<path d="M500.5,527.5 L503.5,528.5 L514.5,529.5" fill="none" stroke="#000" stroke-width="1"/>
<path d="M568.5,510.5 L534.5,510.5 L514.5,514.5 L534.5,517.5 L568.5,517.5 Z" fill="#FFDCB8" stroke="#000" stroke-width="1"/>
<path d="M568.5,525.5 L534.5,525.5 L514.5,529.5 L534.5,532.5 L568.5,532.5 Z" fill="#FFDCB8" stroke="#000" stroke-width="1"/>
<path d="M454.5,540.5 L489.5,540.5 L509.5,544.5 L489.5,547.5 L454.5,547.5 Z" fill="#FFDCB8" stroke="#000" stroke-width="1"/>
<path d="M505.5,552.5 L470.5,552.5 L450.5,556.5 L470.5,559.5 L505.5,559.5 Z" fill="#FFDCB8" stroke="#000" stroke-width="1"/>
<path d="M509.5,544.5 L541.5,544.5" fill="none" stroke="#000" stroke-width="1"/>
<path d="M505.5,556.5 L541.5,556.5" fill="none" stroke="#000" stroke-width="1"/>
<rect x="541.5" y="540.5" width="38" height="19" fill="#B4ECFC" stroke="#000"/>
<path d="M539.5,550.5 L541.5,550.5" fill="none" stroke="#000" stroke-width="1"/>
<path d="M653.5,236.5 L688.5,236.5 L708.5,240.5 L688.5,243.5 L653.5,243.5 Z" fill="#FFDCB8" stroke="#000" stroke-width="1"/>
<path d="M708.5,239.5 L727.5,239.5" fill="none" stroke="#000" stroke-width="1"/>
<path d="M654.5,247.5 L689.5,247.5 L709.5,251.5 L689.5,254.5 L654.5,254.5 Z" fill="#FFDCB8" stroke="#000" stroke-width="1"/>
<path d="M709.5,251.5 L727.5,251.5" fill="none" stroke="#000" stroke-width="1"/>
<rect x="727.5" y="220.5" width="62" height="325" fill="#FFFF58" stroke="#000"/>
<path d="M757.5,545.5 L757.5,547.5" fill="none" stroke="#000" stroke-width="1"/>
<path d="M797.5,151.5 L763.5,151.5 L742.5,155.5 L763.5,158.5 L797.5,158.5 Z" fill="#FFC000" stroke="#000" stroke-width="1"/>
<path d="M797.5,159.5 L763.5,159.5 L742.5,163.5 L763.5,166.5 L797.5,166.5 Z" fill="#FFC000" stroke="#000" stroke-width="1"/>
<path d="M797.5,180.5 L763.5,180.5 L742.5,184.5 L763.5,187.5 L797.5,187.5 Z" fill="#FFC000" stroke="#000" stroke-width="1"/>
<path d="M797.5,192.5 L763.5,192.5 L742.5,196.5 L763.5,199.5 L797.5,199.5 Z" fill="#FFC000" stroke="#000" stroke-width="1"/>
<path d="M797.5,155.5 L851.5,155.5" fill="none" stroke="#000" stroke-width="1"/>
<path d="M797.5,162.5 L851.5,162.5" fill="none" stroke="#000" stroke-width="1"/>
<path d="M797.5,183.5 L851.5,183.5" fill="none" stroke="#000" stroke-width="1"/>
<path d="M797.5,196.5 L799.5,196.5" fill="none" stroke="#000" stroke-width="1"/>
<path d="M851.5,190.5 L799.5,190.5 L799.5,545.5 L904.5,545.5" fill="none" stroke="#000" stroke-width="1"/>
<path d="M851.5,204.5 L757.5,204.5 L757.5,220.5" fill="none" stroke="#000" stroke-width="1"/>
<path d="M851.5,211.5 L766.5,211.5 L766.5,220.5" fill="none" stroke="#000" stroke-width="1"/>
<path d="M824.5,183.5 L824.5,228.5" fill="none" stroke="#000" stroke-width="1"/>
<path d="M851.5,197.5 L843.5,197.5 L843.5,228.5" fill="none" stroke="#000" stroke-width="1"/>
<rect x="851.5" y="152.5" width="32" height="69" fill="#FFB0B0" stroke="#000"/>
<path d="M867.5,221.5 L867.5,223.5" fill="none" stroke="#000" stroke-width="1"/>
<path d="M849.5,170.5 L851.5,170.5" fill="none" stroke="#000" stroke-width="1"/>
<path d="M849.5,177.5 L851.5,177.5" fill="none" stroke="#000" stroke-width="1"/>
<path d="M849.5,219.5 L851.5,219.5" fill="none" stroke="#000" stroke-width="1"/>
<rect x="815.5" y="228.5" width="36" height="20" fill="#B4ECFC" stroke="#000"/>
<path d="M824.5,248.5 L824.5,250.5" fill="none" stroke="#000" stroke-width="1"/>
<path d="M843.5,248.5 L843.5,250.5" fill="none" stroke="#000" stroke-width="1"/>
<path d="M851.5,239.5 L853.5,239.5" fill="none" stroke="#000" stroke-width="1"/>
<path d="M883.5,187.5 L893.5,187.5 L893.5,259.5 L904.5,259.5" fill="none" stroke="#000" stroke-width="1"/>
<path d="M890.5,263.5 L896.5,263.5" fill="none" stroke="#000" stroke-width="1"/>
<path d="M891.5,265.5 L895.5,265.5" fill="none" stroke="#000" stroke-width="1"/>
<path d="M893.5,267.5 L894.5,267.5" fill="none" stroke="#000" stroke-width="1"/>
<path d="M904.5,220.5 L889.5,220.5 L889.5,256.5 L789.5,256.5" fill="none" stroke="#000" stroke-width="1"/>
<rect x="904.5" y="193.5" width="36" height="53" fill="#BFFF00" stroke="#000"/>
<path d="M922.5,246.5 L922.5,248.5" fill="none" stroke="#000" stroke-width="1"/>
<path d="M940.5,198.5 L969.5,198.5" fill="none" stroke="#000" stroke-width="1"/>
<path d="M1034.5,194.5 L994.5,194.5 L969.5,198.5 L994.5,201.5 L1034.5,201.5 Z" fill="#FFC000" stroke="#000" stroke-width="1"/>
<path d="M940.5,208.5 L969.5,208.5" fill="none" stroke="#000" stroke-width="1"/>
<path d="M1034.5,204.5 L994.5,204.5 L969.5,208.5 L994.5,211.5 L1034.5,211.5 Z" fill="#FFC000" stroke="#000" stroke-width="1"/>
<path d="M940.5,217.5 L969.5,217.5" fill="none" stroke="#000" stroke-width="1"/>
<path d="M1034.5,213.5 L994.5,213.5 L969.5,217.5 L994.5,220.5 L1034.5,220.5 Z" fill="#FFC000" stroke="#000" stroke-width="1"/>
<path d="M940.5,226.5 L969.5,226.5" fill="none" stroke="#000" stroke-width="1"/>
<path d="M969.5,222.5 L1009.5,222.5 L1034.5,226.5 L1009.5,229.5 L969.5,229.5 Z" fill="#FFC000" stroke="#000" stroke-width="1"/>
<path d="M940.5,235.5 L969.5,235.5" fill="none" stroke="#000" stroke-width="1"/>
<path d="M1034.5,231.5 L994.5,231.5 L969.5,235.5 L994.5,238.5 L1034.5,238.5 Z" fill="#FFC000" stroke="#000" stroke-width="1"/>
<path d="M940.5,243.5 L969.5,243.5" fill="none" stroke="#000" stroke-width="1"/>
<path d="M969.5,239.5 L1009.5,239.5 L1034.5,243.5 L1009.5,246.5 L969.5,246.5 Z" fill="#FFC000" stroke="#000" stroke-width="1"/>
<rect x="904.5" y="254.5" width="36" height="343" fill="#BFFF00" stroke="#000"/>
<path d="M922.5,597.5 L922.5,599.5" fill="none" stroke="#000" stroke-width="1"/>
<rect x="819.5" y="272.5" width="45" height="153" fill="#B4ECFC" stroke="#000"/>
<path d="M841.5,427.5 L841.5,428.5" fill="none" stroke="#000" stroke-width="1"/>
<path d="M789.5,349.5 L819.5,349.5" fill="none" stroke="#000" stroke-width="1"/>
<path d="M866.5,278.5 L904.5,278.5" fill="none" stroke="#000" stroke-width="1"/>
<path d="M866.5,288.5 L904.5,288.5" fill="none" stroke="#000" stroke-width="1"/>
<path d="M866.5,297.5 L904.5,297.5" fill="none" stroke="#000" stroke-width="1"/>
<path d="M866.5,307.5 L904.5,307.5" fill="none" stroke="#000" stroke-width="1"/>
<path d="M866.5,316.5 L904.5,316.5" fill="none" stroke="#000" stroke-width="1"/>
<path d="M866.5,326.5 L904.5,326.5" fill="none" stroke="#000" stroke-width="1"/>
<path d="M866.5,335.5 L904.5,335.5" fill="none" stroke="#000" stroke-width="1"/>
<path d="M866.5,345.5 L904.5,345.5" fill="none" stroke="#000" stroke-width="1"/>
<path d="M866.5,355.5 L904.5,355.5" fill="none" stroke="#000" stroke-width="1"/>
<path d="M866.5,364.5 L904.5,364.5" fill="none" stroke="#000" stroke-width="1"/>
<path d="M866.5,374.5 L904.5,374.5" fill="none" stroke="#000" stroke-width="1"/>
<path d="M866.5,383.5 L904.5,383.5" fill="none" stroke="#000" stroke-width="1"/>
<path d="M866.5,393.5 L904.5,393.5" fill="none" stroke="#000" stroke-width="1"/>
<path d="M866.5,402.5 L904.5,402.5" fill="none" stroke="#000" stroke-width="1"/>
<path d="M866.5,412.5 L904.5,412.5" fill="none" stroke="#000" stroke-width="1"/>
<path d="M866.5,421.5 L904.5,421.5" fill="none" stroke="#000" stroke-width="1"/>
<path d="M940.5,278.5 L969.5,278.5" fill="none" stroke="#000" stroke-width="1"/>
<path d="M1034.5,274.5 L994.5,274.5 L969.5,278.5 L994.5,281.5 L1034.5,281.5 Z" fill="#B4ECFC" stroke="#000" stroke-width="1"/>
<path d="M940.5,288.5 L969.5,288.5" fill="none" stroke="#000" stroke-width="1"/>
<path d="M969.5,284.5 L1009.5,284.5 L1034.5,288.5 L1009.5,291.5 L969.5,291.5 Z" fill="#B4ECFC" stroke="#000" stroke-width="1"/>
<path d="M940.5,297.5 L969.5,297.5" fill="none" stroke="#000" stroke-width="1"/>
<path d="M1034.5,293.5 L994.5,293.5 L969.5,297.5 L994.5,300.5 L1034.5,300.5 Z" fill="#B4ECFC" stroke="#000" stroke-width="1"/>
<path d="M940.5,307.5 L969.5,307.5" fill="none" stroke="#000" stroke-width="1"/>
<path d="M1034.5,303.5 L994.5,303.5 L969.5,307.5 L994.5,310.5 L1034.5,310.5 Z" fill="#B4ECFC" stroke="#000" stroke-width="1"/>
<path d="M940.5,316.5 L969.5,316.5" fill="none" stroke="#000" stroke-width="1"/>
<path d="M1034.5,312.5 L994.5,312.5 L969.5,316.5 L994.5,319.5 L1034.5,319.5 Z" fill="#B4ECFC" stroke="#000" stroke-width="1"/>
<path d="M940.5,326.5 L969.5,326.5" fill="none" stroke="#000" stroke-width="1"/>
<path d="M1034.5,322.5 L994.5,322.5 L969.5,326.5 L994.5,329.5 L1034.5,329.5 Z" fill="#B4ECFC" stroke="#000" stroke-width="1"/>
<path d="M940.5,335.5 L969.5,335.5" fill="none" stroke="#000" stroke-width="1"/>
<path d="M1034.5,331.5 L994.5,331.5 L969.5,335.5 L994.5,338.5 L1034.5,338.5 Z" fill="#B4ECFC" stroke="#000" stroke-width="1"/>
<path d="M940.5,345.5 L969.5,345.5" fill="none" stroke="#000" stroke-width="1"/>
<path d="M1034.5,341.5 L994.5,341.5 L969.5,345.5 L994.5,348.5 L1034.5,348.5 Z" fill="#B4ECFC" stroke="#000" stroke-width="1"/>
<path d="M940.5,354.5 L969.5,354.5" fill="none" stroke="#000" stroke-width="1"/>
<path d="M969.5,350.5 L1009.5,350.5 L1034.5,354.5 L1009.5,357.5 L969.5,357.5 Z" fill="#B4ECFC" stroke="#000" stroke-width="1"/>
<path d="M940.5,364.5 L969.5,364.5" fill="none" stroke="#000" stroke-width="1"/>
<path d="M1034.5,360.5 L994.5,360.5 L969.5,364.5 L994.5,367.5 L1034.5,367.5 Z" fill="#B4ECFC" stroke="#000" stroke-width="1"/>
<path d="M940.5,373.5 L969.5,373.5" fill="none" stroke="#000" stroke-width="1"/>
<path d="M1034.5,369.5 L994.5,369.5 L969.5,373.5 L994.5,376.5 L1034.5,376.5 Z" fill="#B4ECFC" stroke="#000" stroke-width="1"/>
<path d="M940.5,383.5 L969.5,383.5" fill="none" stroke="#000" stroke-width="1"/>
<path d="M1034.5,379.5 L994.5,379.5 L969.5,383.5 L994.5,386.5 L1034.5,386.5 Z" fill="#B4ECFC" stroke="#000" stroke-width="1"/>
<path d="M940.5,393.5 L969.5,393.5" fill="none" stroke="#000" stroke-width="1"/>
<path d="M1034.5,389.5 L994.5,389.5 L969.5,393.5 L994.5,396.5 L1034.5,396.5 Z" fill="#B4ECFC" stroke="#000" stroke-width="1"/>
<path d="M940.5,402.5 L969.5,402.5" fill="none" stroke="#000" stroke-width="1"/>
<path d="M969.5,398.5 L1009.5,398.5 L1034.5,402.5 L1009.5,405.5 L969.5,405.5 Z" fill="#B4ECFC" stroke="#000" stroke-width="1"/>
<path d="M940.5,412.5 L969.5,412.5" fill="none" stroke="#000" stroke-width="1"/>
<path d="M969.5,408.5 L1009.5,408.5 L1034.5,412.5 L1009.5,415.5 L969.5,415.5 Z" fill="#B4ECFC" stroke="#000" stroke-width="1"/>
<path d="M940.5,421.5 L969.5,421.5" fill="none" stroke="#000" stroke-width="1"/>
<path d="M969.5,417.5 L1009.5,417.5 L1034.5,421.5 L1009.5,424.5 L969.5,424.5 Z" fill="#B4ECFC" stroke="#000" stroke-width="1"/>
<path d="M940.5,431.5 L969.5,431.5" fill="none" stroke="#000" stroke-width="1"/>
<path d="M1034.5,427.5 L994.5,427.5 L969.5,431.5 L994.5,434.5 L1034.5,434.5 Z" fill="#B4ECFC" stroke="#000" stroke-width="1"/>
<path d="M940.5,440.5 L969.5,440.5" fill="none" stroke="#000" stroke-width="1"/>
<path d="M1034.5,436.5 L994.5,436.5 L969.5,440.5 L994.5,443.5 L1034.5,443.5 Z" fill="#B4ECFC" stroke="#000" stroke-width="1"/>
<path d="M940.5,450.5 L969.5,450.5" fill="none" stroke="#000" stroke-width="1"/>
<path d="M1034.5,446.5 L994.5,446.5 L969.5,450.5 L994.5,453.5 L1034.5,453.5 Z" fill="#B4ECFC" stroke="#000" stroke-width="1"/>
<path d="M940.5,459.5 L969.5,459.5" fill="none" stroke="#000" stroke-width="1"/>
<path d="M969.5,455.5 L1009.5,455.5 L1034.5,459.5 L1009.5,462.5 L969.5,462.5 Z" fill="#B4ECFC" stroke="#000" stroke-width="1"/>
<path d="M940.5,469.5 L969.5,469.5" fill="none" stroke="#000" stroke-width="1"/>
<path d="M969.5,465.5 L1009.5,465.5 L1034.5,469.5 L1009.5,472.5 L969.5,472.5 Z" fill="#B4ECFC" stroke="#000" stroke-width="1"/>
<path d="M940.5,479.5 L969.5,479.5" fill="none" stroke="#000" stroke-width="1"/>
<path d="M969.5,479.5 L981.5,475.5 L1024.5,475.5 L1034.5,479.5 L1024.5,482.5 L981.5,482.5 Z" fill="#B4ECFC" stroke="#000" stroke-width="1"/>
<path d="M940.5,488.5 L969.5,488.5" fill="none" stroke="#000" stroke-width="1"/>
<path d="M969.5,484.5 L1009.5,484.5 L1034.5,488.5 L1009.5,491.5 L969.5,491.5 Z" fill="#B4ECFC" stroke="#000" stroke-width="1"/>
<path d="M940.5,498.5 L969.5,498.5" fill="none" stroke="#000" stroke-width="1"/>
<path d="M969.5,494.5 L1009.5,494.5 L1034.5,498.5 L1009.5,501.5 L969.5,501.5 Z" fill="#B4ECFC" stroke="#000" stroke-width="1"/>
<path d="M940.5,507.5 L969.5,507.5" fill="none" stroke="#000" stroke-width="1"/>
<path d="M1034.5,503.5 L994.5,503.5 L969.5,507.5 L994.5,510.5 L1034.5,510.5 Z" fill="#B4ECFC" stroke="#000" stroke-width="1"/>
<path d="M940.5,517.5 L969.5,517.5" fill="none" stroke="#000" stroke-width="1"/>
<path d="M969.5,513.5 L1009.5,513.5 L1034.5,517.5 L1009.5,520.5 L969.5,520.5 Z" fill="#B4ECFC" stroke="#000" stroke-width="1"/>
<path d="M940.5,526.5 L969.5,526.5" fill="none" stroke="#000" stroke-width="1"/>
<path d="M969.5,526.5 L981.5,522.5 L1024.5,522.5 L1034.5,526.5 L1024.5,529.5 L981.5,529.5 Z" fill="#B4ECFC" stroke="#000" stroke-width="1"/>
<path d="M940.5,536.5 L969.5,536.5" fill="none" stroke="#000" stroke-width="1"/>
<path d="M1034.5,532.5 L994.5,532.5 L969.5,536.5 L994.5,539.5 L1034.5,539.5 Z" fill="#B4ECFC" stroke="#000" stroke-width="1"/>
<path d="M940.5,545.5 L969.5,545.5" fill="none" stroke="#000" stroke-width="1"/>
<path d="M969.5,541.5 L1009.5,541.5 L1034.5,545.5 L1009.5,548.5 L969.5,548.5 Z" fill="#B4ECFC" stroke="#000" stroke-width="1"/>
<path d="M940.5,555.5 L969.5,555.5" fill="none" stroke="#000" stroke-width="1"/>
<path d="M969.5,551.5 L1009.5,551.5 L1034.5,555.5 L1009.5,558.5 L969.5,558.5 Z" fill="#B4ECFC" stroke="#000" stroke-width="1"/>
<path d="M940.5,564.5 L969.5,564.5" fill="none" stroke="#000" stroke-width="1"/>
<path d="M969.5,560.5 L1009.5,560.5 L1034.5,564.5 L1009.5,567.5 L969.5,567.5 Z" fill="#B4ECFC" stroke="#000" stroke-width="1"/>
<path d="M940.5,574.5 L969.5,574.5" fill="none" stroke="#000" stroke-width="1"/>
<path d="M969.5,574.5 L981.5,570.5 L1024.5,570.5 L1034.5,574.5 L1024.5,577.5 L981.5,577.5 Z" fill="#B4ECFC" stroke="#000" stroke-width="1"/>
<path d="M940.5,584.5 L969.5,584.5" fill="none" stroke="#000" stroke-width="1"/>
<path d="M969.5,580.5 L1009.5,580.5 L1034.5,584.5 L1009.5,587.5 L969.5,587.5 Z" fill="#B4ECFC" stroke="#000" stroke-width="1"/>
<path d="M940.5,593.5 L969.5,593.5" fill="none" stroke="#000" stroke-width="1"/>
<path d="M969.5,589.5 L1009.5,589.5 L1034.5,593.5 L1009.5,596.5 L969.5,596.5 Z" fill="#B4ECFC" stroke="#000" stroke-width="1"/>
<rect x="819.5" y="431.5" width="45" height="17" fill="#00AA00" stroke="#000"/>
<path d="M841.5,448.5 L841.5,450.5" fill="none" stroke="#000" stroke-width="1"/>
<path d="M789.5,440.5 L819.5,440.5" fill="none" stroke="#000" stroke-width="1"/>
<path d="M864.5,434.5 L866.5,434.5 L866.5,431.5 L904.5,431.5" fill="none" stroke="#000" stroke-width="1"/>
<path d="M864.5,440.5 L904.5,440.5" fill="none" stroke="#000" stroke-width="1"/>
<path d="M864.5,444.5 L868.5,444.5 L868.5,450.5 L904.5,450.5" fill="none" stroke="#000" stroke-width="1"/>
<rect x="819.5" y="455.5" width="45" height="7" fill="#BF80FF" stroke="#000"/>
<rect x="819.5" y="466.5" width="45" height="6" fill="#BF80FF" stroke="#000"/>
<rect x="819.5" y="474.5" width="45" height="7" fill="#FFC000" stroke="#000"/>
<path d="M830.5,453.5 L830.5,455.5" fill="none" stroke="#000" stroke-width="1"/>
<path d="M830.5,463.5 L830.5,466.5" fill="none" stroke="#000" stroke-width="1"/>
<path d="M852.5,453.5 L852.5,455.5" fill="none" stroke="#000" stroke-width="1"/>
<path d="M852.5,463.5 L852.5,466.5" fill="none" stroke="#000" stroke-width="1"/>
<path d="M841.5,463.5 L841.5,466.5" fill="none" stroke="#000" stroke-width="1"/>
<path d="M841.5,472.5 L841.5,474.5" fill="none" stroke="#000" stroke-width="1"/>
<path d="M789.5,457.5 L819.5,457.5" fill="none" stroke="#000" stroke-width="1"/>
<path d="M789.5,461.5 L819.5,461.5" fill="none" stroke="#000" stroke-width="1"/>
<path d="M789.5,467.5 L819.5,467.5" fill="none" stroke="#000" stroke-width="1"/>
<path d="M789.5,471.5 L819.5,471.5" fill="none" stroke="#000" stroke-width="1"/>
<path d="M789.5,478.5 L819.5,478.5" fill="none" stroke="#000" stroke-width="1"/>
<path d="M864.5,459.5 L904.5,459.5" fill="none" stroke="#000" stroke-width="1"/>
<path d="M864.5,469.5 L904.5,469.5" fill="none" stroke="#000" stroke-width="1"/>
<path d="M864.5,478.5 L878.5,478.5" fill="none" stroke="#000" stroke-width="1"/>
<path d="M889.5,478.5 L904.5,478.5" fill="none" stroke="#000" stroke-width="1"/>
<rect x="819.5" y="489.5" width="45" height="7" fill="#B4ECFC" stroke="#000"/>
<path d="M841.5,498.5 L841.5,499.5" fill="none" stroke="#000" stroke-width="1"/>
<path d="M789.5,493.5 L819.5,493.5" fill="none" stroke="#000" stroke-width="1"/>
<path d="M904.5,488.5 L867.5,488.5 L866.5,490.5 L866.5,495.5 L867.5,497.5 L904.5,497.5" fill="none" stroke="#000" stroke-width="1"/>
<path d="M789.5,506.5 L904.5,506.5" fill="none" stroke="#000" stroke-width="1"/>
<path d="M789.5,516.5 L904.5,516.5" fill="none" stroke="#000" stroke-width="1"/>
<path d="M789.5,530.5 L818.5,530.5" fill="none" stroke="#000" stroke-width="1"/>
<rect x="818.5" y="527.5" width="45" height="6" fill="#FF80C0" stroke="#000"/>
<path d="M841.5,533.5 L841.5,535.5" fill="none" stroke="#000" stroke-width="1"/>
<path d="M863.5,530.5 L866.5,531.5 L874.5,531.5" fill="none" stroke="#000" stroke-width="1"/>
<path d="M904.5,526.5 L893.5,526.5 L892.5,528.5 L892.5,534.5 L893.5,536.5 L904.5,536.5" fill="none" stroke="#000" stroke-width="1"/>
<path d="M886.5,531.5 L892.5,531.5" fill="none" stroke="#000" stroke-width="1"/>
<path d="M902.5,555.5 L904.5,555.5" fill="none" stroke="#000" stroke-width="1"/>
<path d="M902.5,564.5 L904.5,564.5" fill="none" stroke="#000" stroke-width="1"/>
<rect x="877" y="474" width="3" height="2" fill="#000"/>
<rect x="877" y="477" width="3" height="2" fill="#000"/>
<rect x="877" y="480" width="3" height="2" fill="#000"/>
<rect x="886" y="474" width="3" height="2" fill="#000"/>
<rect x="886" y="477" width="3" height="2" fill="#000"/>
<rect x="886" y="480" width="3" height="2" fill="#000"/>
<rect x="882" y="473" width="2" height="10" fill="#000"/>
<rect x="874" y="527" width="3" height="2" fill="#000"/>
<rect x="874" y="530" width="3" height="2" fill="#000"/>
<rect x="874" y="533" width="3" height="2" fill="#000"/>
<rect x="883" y="527" width="3" height="2" fill="#000"/>
<rect x="883" y="530" width="3" height="2" fill="#000"/>
<rect x="883" y="533" width="3" height="2" fill="#000"/>
<rect x="879" y="526" width="2" height="10" fill="#000"/>
<rect x="874" y="569" width="3" height="2" fill="#000"/>
<rect x="874" y="572" width="3" height="2" fill="#000"/>
<rect x="874" y="575" width="3" height="2" fill="#000"/>
<rect x="883" y="569" width="3" height="2" fill="#000"/>
<rect x="883" y="572" width="3" height="2" fill="#000"/>
<rect x="883" y="575" width="3" height="2" fill="#000"/>
<rect x="879" y="568" width="2" height="10" fill="#000"/>
<rect x="669.5" y="461.5" width="45" height="14" fill="#5858FF" stroke="#000"/>
<path d="M714.5,465.5 L727.5,465.5" fill="none" stroke="#000" stroke-width="1"/>
<rect x="667.5" y="492.5" width="46" height="23" fill="#FFB0B0" stroke="#000"/>
<path d="M713.5,498.5 L727.5,498.5" fill="none" stroke="#000" stroke-width="1"/>
<rect x="667.5" y="524.5" width="46" height="22" fill="#FFB0B0" stroke="#000"/>
<path d="M713.5,529.5 L727.5,529.5" fill="none" stroke="#000" stroke-width="1"/>
<path d="M691.5,515.5 L691.5,524.5" fill="none" stroke="#000" stroke-width="1"/>
<path d="M665.5,498.5 L667.5,498.5" fill="none" stroke="#000" stroke-width="1"/>
<path d="M665.5,535.5 L667.5,535.5" fill="none" stroke="#000" stroke-width="1"/>
<path d="M713.5,510.5 L715.5,510.5" fill="none" stroke="#000" stroke-width="1"/>
<path d="M713.5,541.5 L715.5,541.5" fill="none" stroke="#000" stroke-width="1"/>
<path d="M666.5,510.5 L666.5,593.5 L904.5,593.5" fill="none" stroke="#000" stroke-width="1"/>
<path d="M691.5,546.5 L691.5,548.5 L801.5,548.5 L801.5,483.5 L825.5,483.5" fill="none" stroke="#000" stroke-width="1"/>
<rect x="805.5" y="569.5" width="45" height="6" fill="#C8FFB0" stroke="#000"/>
<path d="M828.5,575.5 L828.5,577.5" fill="none" stroke="#000" stroke-width="1"/>
<rect x="746.5" y="579.5" width="45" height="6" fill="#C8FFB0" stroke="#000"/>
<path d="M769.5,585.5 L769.5,587.5" fill="none" stroke="#000" stroke-width="1"/>
<path d="M657.5,568.5 L816.5,568.5" fill="none" stroke="#000" stroke-width="1"/>
<path d="M657.5,573.5 L805.5,573.5" fill="none" stroke="#000" stroke-width="1"/>
<path d="M657.5,573.5 L657.5,582.5 L746.5,582.5" fill="none" stroke="#000" stroke-width="1"/>
<path d="M791.5,582.5 L793.5,583.5 L904.5,583.5" fill="none" stroke="#000" stroke-width="1"/>
<path d="M850.5,572.5 L872.5,572.5" fill="none" stroke="#000" stroke-width="1"/>
<path d="M886.5,572.5 L889.5,574.5 L904.5,574.5" fill="none" stroke="#000" stroke-width="1"/></svg></div>
<div class="abs dither" style="left:1145px;top:99px;width:17px;height:515px;"></div>
<div class="raisedbtn" style="left:1145px;top:99px;width:17px;height:17px;"></div>
<div class="raisedbtn" style="left:1145px;top:597px;width:17px;height:17px;"></div>
<div class="raisedbtn" style="left:1145px;top:184px;width:17px;height:275px;"></div>
<div class="abs dither" style="left:200px;top:614px;width:945px;height:17px;"></div>
<div class="raisedbtn" style="left:200px;top:614px;width:17px;height:17px;"></div>
<div class="raisedbtn" style="left:1128px;top:614px;width:17px;height:17px;"></div>
<div class="raisedbtn" style="left:217px;top:614px;width:701px;height:17px;"></div>
<div class="abs" style="left:199px;top:632px;width:966px;height:1px;background:#fff;"></div>
<div class="abs" style="left:1163px;top:99px;width:2px;height:534px;background:#fff;"></div>
<div class="abs" style="left:197px;top:637px;width:966px;height:1px;background:#000;"></div>
<div class="abs" style="left:199px;top:638px;width:964px;height:1px;background:#F8F4E4;"></div>
<div class="abs" style="left:197px;top:637px;width:1px;height:332px;background:#000;"></div>
<div class="abs" style="left:198px;top:638px;width:1px;height:330px;background:#fff;"></div>
<div class="abs" style="left:199px;top:968px;width:964px;height:1px;background:#fff;"></div>
<div class="abs" style="left:1163px;top:639px;width:2px;height:331px;background:#fff;"></div>
<div class="abs" style="left:199px;top:658px;width:963px;height:1px;background:#fff;"></div>
<div class="abs tab" style="left:200px;top:641px;width:91px;height:17px;"></div>
<div class="abs tab" style="left:292px;top:641px;width:55px;height:17px;border-right:none;"></div>
<div class="abs tab act" style="left:347px;top:639px;width:118px;height:20px;"></div>
<div class="t" style="left:206.8px;top:644.34px;font-size:12px;letter-spacing:-0.965px;">Design Comment</div>
<div class="t" style="left:298px;top:644.34px;font-size:12px;letter-spacing:-0.645px;">Attributes</div>
<div class="t" style="left:354px;top:642.54px;font-size:12px;letter-spacing:-0.633px;">Design Failure Effects</div>
<div class="abs" style="left:1161px;top:659px;width:1px;height:309px;background:#716F64;"></div>
<div class="abs" style="left:199px;top:967px;width:963px;height:1px;background:#716F64;"></div>
<div class="abs" style="left:211px;top:670px;width:289px;height:285px;background:#fff;border:1px solid;border-color:#ACA899 #fff #fff #ACA899;box-shadow:inset 1px 1px 0 #716F64;box-sizing:border-box;"></div>
<div class="abs" style="left:213px;top:672px;width:269px;height:19px;background:#ECE9D8;border-bottom:1px solid #716F64;border-top:1px solid #fff;box-sizing:border-box;"></div>
<div class="abs" style="left:213px;top:672px;width:24px;height:282px;background:#ECE9D8;border-right:1px solid #716F64;border-left:1px solid #fff;box-sizing:border-box;"></div>
<div class="t" style="left:306.5px;top:675.27px;font-size:11.5px;letter-spacing:-0.377px;">Design Failure Effects</div>
<div class="abs" style="left:213px;top:709px;width:268px;height:1px;background:#C0C0C0;"></div>
<div class="abs" style="left:213px;top:709px;width:24px;height:1px;background:#716F64;"></div>
<div class="abs" style="left:214px;top:691px;width:22px;height:1px;background:#fff;"></div>
<div class="t" style="left:239.75px;top:692.67px;font-size:11.5px;letter-spacing:-0.510px;">GPP and FCF modules cannot be reset.</div>
<div class="abs" style="left:213px;top:728px;width:268px;height:1px;background:#C0C0C0;"></div>
<div class="abs" style="left:213px;top:728px;width:24px;height:1px;background:#716F64;"></div>
<div class="abs" style="left:214px;top:710px;width:22px;height:1px;background:#fff;"></div>
<div class="t" style="left:239.75px;top:711.72px;font-size:11.5px;letter-spacing:-0.362px;width:238.25px;overflow:hidden;">GPP1 will always execute the cold start power up s</div>
<div class="abs" style="left:213px;top:747px;width:268px;height:1px;background:#C0C0C0;"></div>
<div class="abs" style="left:213px;top:747px;width:24px;height:1px;background:#716F64;"></div>
<div class="abs" style="left:214px;top:729px;width:22px;height:1px;background:#fff;"></div>
<div class="t" style="left:239.75px;top:730.77px;font-size:11.5px;letter-spacing:-0.340px;width:238.25px;overflow:hidden;">GPP1 will always execute the quick start power up</div>
<div class="abs" style="left:213px;top:766px;width:268px;height:1px;background:#C0C0C0;"></div>
<div class="abs" style="left:213px;top:766px;width:24px;height:1px;background:#716F64;"></div>
<div class="abs" style="left:214px;top:748px;width:22px;height:1px;background:#fff;"></div>
<div class="t" style="left:239.75px;top:749.82px;font-size:11.5px;letter-spacing:-0.421px;">GPP1 will never perform power down tasks</div>
<div class="abs" style="left:213px;top:785px;width:268px;height:1px;background:#C0C0C0;"></div>
<div class="abs" style="left:213px;top:785px;width:24px;height:1px;background:#716F64;"></div>
<div class="abs" style="left:214px;top:767px;width:22px;height:1px;background:#fff;"></div>
<div class="t" style="left:239.75px;top:768.87px;font-size:11.5px;letter-spacing:-0.233px;">Incorrect&nbsp;&nbsp;&nbsp;&nbsp;&nbsp;time</div>
<div class="abs" style="left:213px;top:804px;width:268px;height:1px;background:#C0C0C0;"></div>
<div class="abs" style="left:213px;top:804px;width:24px;height:1px;background:#716F64;"></div>
<div class="abs" style="left:214px;top:786px;width:22px;height:1px;background:#fff;"></div>
<div class="t" style="left:239.75px;top:787.92px;font-size:11.5px;letter-spacing:-0.185px;width:238.25px;overflow:hidden;">Intermittent opertion or the loss of the ARI module</div>
<div class="abs" style="left:213px;top:823px;width:268px;height:1px;background:#C0C0C0;"></div>
<div class="abs" style="left:213px;top:823px;width:24px;height:1px;background:#716F64;"></div>
<div class="abs" style="left:214px;top:805px;width:22px;height:1px;background:#fff;"></div>
<div class="abs" style="left:238px;top:806px;width:242px;height:16px;background:#316AC5;"></div>
<div class="abs" style="left:213px;top:804px;width:2px;height:19px;background:#404040;"></div>
<div class="abs" style="left:213px;top:804px;width:24px;height:2px;background:#404040;"></div>
<div class="t" style="left:239.75px;top:806.97px;font-size:11.5px;letter-spacing:-0.372px;color:#fff;">Loss of ARI module.</div>
<div class="abs" style="left:213px;top:842px;width:268px;height:1px;background:#C0C0C0;"></div>
<div class="abs" style="left:213px;top:842px;width:24px;height:1px;background:#716F64;"></div>
<div class="abs" style="left:214px;top:824px;width:22px;height:1px;background:#fff;"></div>
<div class="t" style="left:239.75px;top:826.02px;font-size:11.5px;letter-spacing:-0.657px;">Loss of GPP and FCF modules.</div>
<div class="abs" style="left:213px;top:861px;width:268px;height:1px;background:#C0C0C0;"></div>
<div class="abs" style="left:213px;top:861px;width:24px;height:1px;background:#716F64;"></div>
<div class="abs" style="left:214px;top:843px;width:22px;height:1px;background:#fff;"></div>
<div class="t" style="left:239.75px;top:845.07px;font-size:11.5px;letter-spacing:-0.448px;">Loss of HSDN 1 interface.</div>
<div class="abs" style="left:213px;top:880px;width:268px;height:1px;background:#C0C0C0;"></div>
<div class="abs" style="left:213px;top:880px;width:24px;height:1px;background:#716F64;"></div>
<div class="abs" style="left:214px;top:862px;width:22px;height:1px;background:#fff;"></div>
<div class="t" style="left:239.75px;top:864.12px;font-size:11.5px;letter-spacing:-0.448px;">Loss of HSDN 2 interface.</div>
<div class="abs" style="left:213px;top:900px;width:268px;height:1px;background:#C0C0C0;"></div>
<div class="abs" style="left:213px;top:900px;width:24px;height:1px;background:#716F64;"></div>
<div class="abs" style="left:214px;top:881px;width:22px;height:1px;background:#fff;"></div>
<div class="t" style="left:239.75px;top:883.17px;font-size:11.5px;letter-spacing:-0.325px;">N/A for Qlogic NIC.&nbsp; Loss of ARI module for Harris</div>
<div class="abs" style="left:213px;top:919px;width:268px;height:1px;background:#C0C0C0;"></div>
<div class="abs" style="left:213px;top:919px;width:24px;height:1px;background:#716F64;"></div>
<div class="abs" style="left:214px;top:901px;width:22px;height:1px;background:#fff;"></div>
<div class="t" style="left:239.75px;top:902.22px;font-size:11.5px;letter-spacing:-0.166px;">No tactical effect.</div>
<div class="abs" style="left:213px;top:938px;width:268px;height:1px;background:#C0C0C0;"></div>
<div class="abs" style="left:213px;top:938px;width:24px;height:1px;background:#716F64;"></div>
<div class="abs" style="left:214px;top:920px;width:22px;height:1px;background:#fff;"></div>
<div class="t" style="left:239.75px;top:921.27px;font-size:11.5px;letter-spacing:-0.470px;width:238.25px;overflow:hidden;">Operate Condition can only read OFF or STANDBY</div>
<div class="abs" style="left:214px;top:939px;width:22px;height:1px;background:#fff;"></div>
<div class="t" style="left:239.75px;top:940.32px;font-size:11.5px;letter-spacing:-0.527px;width:238.25px;overflow:hidden;">Operate Condition can only read OPERATE or EME</div>
<div class="abs" style="left:481px;top:672px;width:1px;height:282px;background:#C0C0C0;"></div>
<div class="abs" style="left:483px;top:672px;width:16px;height:282px;background:#F3F1EC;"></div>
<div class="abs xpbtn" style="left:483px;top:672px;width:15px;height:16px;"></div>
<div class="abs xpbtn" style="left:483px;top:937px;width:15px;height:16px;"></div>
<div class="abs xpbtn" style="left:483px;top:818px;width:15px;height:75px;"></div>
<div class="abs subtab" style="left:509px;top:670px;width:65px;height:21px;"></div>
<div class="t" style="left:515.5px;top:674.14px;font-size:12px;letter-spacing:-0.685px;">Description</div>
<div class="abs subtab act dither" style="left:577px;top:670px;width:47px;height:21px;"></div>
<div class="t" style="left:584.5px;top:674.84px;font-size:12px;letter-spacing:-1.031px;">Causes</div>
<div class="abs subtab" style="left:627px;top:670px;width:50px;height:21px;"></div>
<div class="t" style="left:633.75px;top:674.14px;font-size:12px;letter-spacing:-0.732px;">Severity</div>
<div class="abs subtab" style="left:680px;top:670px;width:69px;height:21px;"></div>
<div class="t" style="left:686.25px;top:674.14px;font-size:12px;letter-spacing:-0.723px;">Observation</div>
<div class="abs" style="left:509px;top:700px;width:618px;height:254px;background:#EFEFEF;border:2px solid;border-color:#716F64 #fff #fff #716F64;box-sizing:border-box;overflow:hidden;">
<div class="abs cz" style="left:4px;top:4px;width:112px;height:20px;"></div>
<div class="t" style="left:21.299999999999955px;top:8.67px;font-size:11.5px;letter-spacing:-0.018px;font-weight:bold;">Combined Effect</div>
<div class="abs" style="left:20px;top:24px;width:18px;height:240px;background:#A6CAF0;"></div>
<div class="abs" style="left:38px;top:24px;width:1px;height:240px;background:#202020;"></div>
<div class="abs cz" style="left:40px;top:28px;width:247px;height:20px;"></div>
<div class="t" style="left:45.25px;top:32.87px;font-size:11.5px;letter-spacing:-0.052px;font-weight:bold;">Decoupling (B) : Module no longer operates</div>
<div class="abs cz" style="left:40px;top:52px;width:248px;height:20px;"></div>
<div class="t" style="left:45.25px;top:56.87px;font-size:11.5px;letter-spacing:-0.005px;font-weight:bold;">Decoupling (A) : Module no longer operates</div>
<div class="abs cz" style="left:40px;top:76px;width:359px;height:20px;"></div>
<div class="t" style="left:45.25px;top:80.87px;font-size:11.5px;letter-spacing:-0.088px;font-weight:bold;">External I/O Ckts : Loss of RS-232, wallclock, discretes, 1553 bus</div>
<div class="abs cz" style="left:40px;top:100px;width:281px;height:20px;"></div>
<div class="t" style="left:45.25px;top:104.87px;font-size:11.5px;letter-spacing:-0.124px;font-weight:bold;">1553 XFMR : 1553 dead -- no longer communicates</div>
<div class="abs cz" style="left:40px;top:124px;width:205px;height:20px;"></div>
<div class="t" style="left:45.25px;top:128.87px;font-size:11.5px;letter-spacing:-0.119px;font-weight:bold;">ACE : 1553 no longer communicates</div>
<div class="abs cz" style="left:40px;top:148px;width:312px;height:20px;"></div>
<div class="t" style="left:45.25px;top:152.87px;font-size:11.5px;letter-spacing:-0.142px;font-weight:bold;">Fibre Channel FCF NIC FPGA : ARI may be stuck in reset</div>
<div class="abs cz" style="left:40px;top:172px;width:307px;height:20px;"></div>
<div class="t" style="left:45.25px;top:176.87px;font-size:11.5px;letter-spacing:-0.136px;font-weight:bold;">Fibre Channel FCF NIC FPGA : ARI will be stuck in reset</div>
<div class="abs cz" style="left:40px;top:196px;width:300px;height:20px;"></div>
<div class="t" style="left:45.25px;top:200.87px;font-size:11.5px;letter-spacing:0.060px;font-weight:bold;">Power Supervisor : Module no longer communicates</div>
<div class="abs cz" style="left:40px;top:220px;width:423px;height:20px;"></div>
<div class="t" style="left:45.25px;top:224.87px;font-size:11.5px;letter-spacing:-0.115px;font-weight:bold;">Fibre Channel FCF NIC FPGA : Fibre channel communication with switch lost</div>
<div class="abs cz" style="left:40px;top:244px;width:248px;height:20px;"></div>
<div class="t" style="left:45.25px;top:248.87px;font-size:11.5px;letter-spacing:0.009px;font-weight:bold;">SRAM : Fibre Channel communication fault</div>
</div>
<div class="abs" style="left:1109px;top:702px;width:17px;height:251px;background:#F3F1EC;"></div>
<div class="abs xpbtn" style="left:1109px;top:702px;width:16px;height:16px;"></div>
<div class="abs xpbtn" style="left:1109px;top:936px;width:16px;height:16px;"></div>
<div class="abs xpbtn" style="left:1109px;top:719px;width:16px;height:43px;"></div>
<div class="abs pm" style="left:1131px;top:701px;width:20px;height:21px;"></div>
<div class="abs pm" style="left:1131px;top:726px;width:20px;height:21px;"></div>
<div class="abs" style="left:1166px;top:98px;width:5px;height:890px;background:#fff;"></div>
<div class="abs" style="left:1171px;top:98px;width:1px;height:890px;background:#000;"></div>
<div class="abs" style="left:1172px;top:98px;width:1px;height:890px;background:#55544C;"></div>
<div class="t" style="left:1185px;top:100.65px;font-size:14px;letter-spacing:-0.325px;color:#7A96DF;">Symbol ...</div>
<div class="t" style="left:24.4px;top:977.47px;font-size:11.5px;letter-spacing:-0.369px;">For Help, press F1</div>
<div class="abs" style="left:1077px;top:974px;width:26px;height:15px;border:1px solid;border-color:#ACA899 #fff #ECE9D8 #ACA899;box-sizing:border-box;"></div>
<div class="abs" style="left:1105px;top:974px;width:28px;height:15px;border:1px solid;border-color:#ACA899 #fff #ECE9D8 #ACA899;box-sizing:border-box;"></div>
<div class="abs" style="left:1135px;top:974px;width:31px;height:15px;border:1px solid;border-color:#ACA899 #fff #ECE9D8 #ACA899;box-sizing:border-box;"></div>
<div class="t" style="left:1106.75px;top:977.07px;font-size:11.5px;letter-spacing:-1.518px;">NUM</div>
<div class="abs" style="left:0px;top:989px;width:24px;height:1px;background:#ACA899;"></div>
<div class="abs" style="left:24px;top:989px;width:1256px;height:1px;background:#F7F0DA;"></div>
<div class="abs" style="left:0px;top:990px;width:1280px;height:1px;background:#2E6AC4;"></div>
<div class="abs" style="left:0px;top:991px;width:1280px;height:3px;background:linear-gradient(to bottom,#358BEC,#2F7BE2);"></div>

<svg width="1280" height="994" viewBox="0 0 1280 994" shape-rendering="crispEdges" style="position:absolute;left:0;top:0;pointer-events:none;"><rect x="2" y="4" width="16" height="16" fill="#0000F0" /><rect x="2" y="4" width="16" height="6" fill="#0000B0" /><rect x="3" y="6" width="15" height="1" fill="#A8A8E8" /><rect x="4" y="7" width="1" height="6" fill="#A8A8E8" /><rect x="7" y="13" width="11" height="1" fill="#A8A8E8" /><rect x="2" y="15" width="2" height="1" fill="#A8A8E8" /><rect x="7" y="17" width="11" height="1" fill="#A8A8E8" /><circle cx="5" cy="6.5" r="2" fill="#00E000" shape-rendering="auto"/><circle cx="12" cy="6.5" r="2" fill="#00E000" shape-rendering="auto"/><rect x="3" y="12" width="4" height="6" fill="#FF0000" /><ellipse cx="12" cy="13.3" rx="2" ry="1.1" fill="#FFFF00" shape-rendering="auto"/><ellipse cx="12" cy="17.3" rx="2" ry="1.1" fill="#FFFF00" shape-rendering="auto"/>
<rect x="4" y="27" width="16" height="17" fill="#008080" /><rect x="5" y="28" width="14" height="14" fill="#C4C4C4" /><rect x="6" y="29" width="4" height="4" fill="#00FFFF" /><rect x="13" y="29" width="4" height="4" fill="#00FFFF" /><rect x="13" y="36" width="4" height="4" fill="#00FFFF" /><rect x="5" y="31" width="1" height="1" fill="#5050A0" /><rect x="10" y="31" width="3" height="1" fill="#5050A0" /><rect x="11" y="31" width="1" height="7" fill="#5050A0" /><rect x="11" y="38" width="2" height="1" fill="#5050A0" /><rect x="17" y="31" width="2" height="1" fill="#5050A0" /><rect x="17" y="38" width="2" height="1" fill="#5050A0" />
<rect x="1216" y="15" width="7" height="3" fill="#fff" /><rect x="1242.5" y="7.5" width="6" height="6" fill="none" stroke="#fff" stroke-width="1"/><rect x="1242" y="7" width="7" height="2" fill="#fff" /><rect x="1239" y="10" width="8" height="7" fill="#2C5CDC" /><rect x="1239.5" y="10.5" width="6" height="6" fill="none" stroke="#fff" stroke-width="1"/><rect x="1239" y="10" width="7" height="2" fill="#fff" /><path d="M1263,8 l9,9 M1272,8 l-9,9" fill="none" stroke="#fff" stroke-width="2.4" shape-rendering="auto" stroke-linecap="square"/>
<rect x="1227" y="27" width="16" height="17" fill="#F3F2EA" /><rect x="1227" y="27" width="16" height="1" fill="#fff" /><rect x="1227" y="27" width="1" height="17" fill="#fff" /><rect x="1245" y="27" width="16" height="17" fill="#F3F2EA" /><rect x="1245" y="27" width="16" height="1" fill="#fff" /><rect x="1245" y="27" width="1" height="17" fill="#fff" /><rect x="1263" y="27" width="16" height="17" fill="#F3F2EA" /><rect x="1263" y="27" width="16" height="1" fill="#fff" /><rect x="1263" y="27" width="1" height="17" fill="#fff" /><rect x="1231" y="37" width="6" height="2" fill="#4D4D4D" /><rect x="1250.5" y="30.5" width="6" height="5" fill="none" stroke="#4D4D4D"/><rect x="1250" y="30" width="7" height="2" fill="#4D4D4D" /><rect x="1248" y="33" width="7" height="6" fill="#F3F2EA" /><rect x="1248.5" y="33.5" width="6" height="5" fill="none" stroke="#4D4D4D"/><rect x="1248" y="33" width="7" height="2" fill="#4D4D4D" /><path d="M1267.5,31.5 l7,7 M1274.5,31.5 l-7,7" fill="none" stroke="#4D4D4D" stroke-width="2" shape-rendering="auto"/>
<path d="M13.5,51.5 h7 l3,3 v9 h-10 z" fill="#fff" stroke="#000" stroke-width="1" /><path d="M20.5,51.5 v3 h3" fill="none" stroke="#000" stroke-width="1" />
<path d="M34.5,55.5 h3 l1,1 h6 v2 h-7 l-3,4 z" fill="#FFFF80" stroke="#000" stroke-width="1" /><path d="M34.5,63.5 l4,-5 h10 l-4,5 z" fill="#808000" stroke="#000" stroke-width="1" /><path d="M42.5,52.5 q3,-2 5,1" fill="none" stroke="#000" stroke-width="1" /><path d="M47.5,51.5 v3 h-3" fill="none" stroke="#000" stroke-width="1" />
<rect x="57.5" y="51.5" width="13" height="13" fill="#808000" stroke="#000"/><rect x="60" y="52" width="8" height="6.02" fill="#ECE9D8" /><rect x="60" y="60" width="8" height="4" fill="#000" /><rect x="65" y="61" width="2" height="3" fill="#ECE9D8" /><rect x="68" y="52" width="1" height="1" fill="#ECE9D8" />
<rect x="85" y="51" width="10" height="10" fill="#FF00FF" /><rect x="84" y="52" width="10" height="10" fill="#C000C0" /><rect x="83" y="53" width="10" height="10" fill="#FF00FF" /><rect x="80.5" y="55.5" width="10" height="10" fill="#808000" stroke="#000"/><rect x="83" y="56" width="5" height="4.7299999999999995" fill="#ECE9D8" /><rect x="83" y="61" width="5" height="4" fill="#000" /><rect x="85" y="62" width="2" height="3" fill="#ECE9D8" /><rect x="88" y="56" width="1" height="1" fill="#ECE9D8" />
<g transform="translate(1,1)"><path d="M114,51 L117.5,60 M119,51 L115.5,60" fill="none" stroke="#fff" stroke-width="1.2" shape-rendering="auto"/><ellipse cx="114" cy="62" rx="2" ry="2.6" fill="none" stroke="#fff" stroke-width="1.2" shape-rendering="auto"/><ellipse cx="119" cy="62" rx="2" ry="2.6" fill="none" stroke="#fff" stroke-width="1.2" shape-rendering="auto"/></g><path d="M114,51 L117.5,60 M119,51 L115.5,60" fill="none" stroke="#ACA899" stroke-width="1.2" shape-rendering="auto"/><ellipse cx="114" cy="62" rx="2" ry="2.6" fill="none" stroke="#ACA899" stroke-width="1.2" shape-rendering="auto"/><ellipse cx="119" cy="62" rx="2" ry="2.6" fill="none" stroke="#ACA899" stroke-width="1.2" shape-rendering="auto"/>
<path d="M133.5,52.5 h5 l3,3 v6 h-8 z" fill="none" stroke="#fff" stroke-width="1" /><rect x="135" y="56" width="4" height="1" fill="#fff" /><rect x="135" y="58" width="4" height="1" fill="#fff" /><path d="M139.5,56.5 h5 l3,3 v6 h-8 z" fill="none" stroke="#fff" stroke-width="1" /><rect x="141" y="60" width="4" height="1" fill="#fff" /><rect x="141" y="62" width="4" height="1" fill="#fff" /><path d="M132.5,51.5 h5 l3,3 v6 h-8 z" fill="none" stroke="#ACA899" stroke-width="1" /><rect x="134" y="55" width="4" height="1" fill="#ACA899" /><rect x="134" y="57" width="4" height="1" fill="#ACA899" /><path d="M138.5,55.5 h5 l3,3 v6 h-8 z" fill="none" stroke="#ACA899" stroke-width="1" /><rect x="140" y="59" width="4" height="1" fill="#ACA899" /><rect x="140" y="61" width="4" height="1" fill="#ACA899" />
<rect x="155.5" y="53.5" width="12" height="11" fill="#6B6B2A" stroke="#000"/><rect x="159" y="51" width="5" height="3" fill="#000" /><rect x="160" y="52" width="3" height="2" fill="#FFFF00" /><rect x="158" y="53" width="7" height="1" fill="#C0C000" /><rect x="161.5" y="58.5" width="8" height="7" fill="#fff" stroke="#000080"/><rect x="163" y="60" width="3" height="1" fill="#000080" /><rect x="163" y="62" width="5" height="1" fill="#000080" />
<path d="M187.5,51.5 h8 l-2,5 h-8 z" fill="#fff" stroke="#000" stroke-width="1" /><path d="M183.5,58.5 l2,-2 h11 l2,2 v4 h-15 z" fill="#ECE9D8" stroke="#000" stroke-width="1" /><path d="M183.5,60.5 h15" fill="none" stroke="#000" stroke-width="1" /><rect x="184" y="62" width="14" height="2" fill="#fff" /><rect x="183.5" y="62.5" width="15" height="2" fill="none" stroke="#000"/><rect x="190" y="61" width="3" height="1" fill="#E0E000" />
<rect x="215.5" y="51.5" width="15" height="15" fill="#F4F2E8" stroke="#008080"/><rect x="216.5" y="53.5" width="4" height="4" fill="#00F0F8" stroke="#20A0A0"/><rect x="224.5" y="53.5" width="4" height="4" fill="#00F0F8" stroke="#20A0A0"/><rect x="224.5" y="59.5" width="4" height="4" fill="#00F0F8" stroke="#20A0A0"/><rect x="216" y="55" width="1" height="1" fill="#0000A0" /><rect x="221" y="55" width="4" height="1.3" fill="#0000A0" /><rect x="222" y="55" width="1.3" height="7" fill="#0000A0" /><rect x="222" y="61" width="3" height="1.3" fill="#0000A0" /><rect x="229" y="55" width="1" height="1.3" fill="#0000A0" /><rect x="229" y="61" width="1" height="1.3" fill="#0000A0" />
<rect x="238.5" y="51.5" width="15" height="15" fill="#F4F2E8" stroke="#008080"/><rect x="240.5" y="52.5" width="4" height="2.5" fill="#00F000" stroke="#008000"/><rect x="247.5" y="57.5" width="4" height="2.5" fill="#00F000" stroke="#008000"/><rect x="240.5" y="57.5" width="4" height="2.5" fill="#F00000" stroke="#900000"/><rect x="247.5" y="62.5" width="4" height="2.5" fill="#F00000" stroke="#900000"/><rect x="242" y="55" width="1.3" height="3" fill="#008000" /><rect x="245" y="58.2" width="3" height="1.2" fill="#900000" /><rect x="249" y="60" width="1.3" height="3" fill="#008000" />
<rect x="261.5" y="51.5" width="15" height="15" fill="#FFFBF0" stroke="#000"/><rect x="262" y="52" width="14" height="2" fill="#00E8F0" /><rect x="262" y="54" width="14" height="1" fill="#008080" /><rect x="262" y="57" width="14" height="1" fill="#008080" /><rect x="262" y="60" width="14" height="1" fill="#008080" /><rect x="262" y="63" width="14" height="1" fill="#008080" /><rect x="266" y="52" width="1" height="14" fill="#008080" /><rect x="271" y="52" width="1" height="14" fill="#008080" /><rect x="261.5" y="51.5" width="15" height="15" fill="none" stroke="#000"/>
<rect x="292.5" y="57.5" width="4" height="4" fill="#FFFF00" stroke="#808000" stroke-width="1.2"/><rect x="301.5" y="53.5" width="4" height="4" fill="#FFFF00" stroke="#808000" stroke-width="1.2"/><rect x="301.5" y="62.5" width="4" height="4" fill="#FFFF00" stroke="#808000" stroke-width="1.2"/><rect x="291" y="59" width="2" height="1.2" fill="#000" /><rect x="297" y="59" width="3" height="1.2" fill="#000" /><rect x="299" y="55" width="1.2" height="10" fill="#000" /><rect x="299" y="55" width="3" height="1.2" fill="#000" /><rect x="299" y="64" width="3" height="1.2" fill="#000" /><rect x="306" y="55" width="1" height="1.2" fill="#000" /><rect x="306" y="64" width="1" height="1.2" fill="#000" />
<rect x="313.5" y="52.5" width="2" height="2" fill="#FFFF00" stroke="#808000"/><rect x="317" y="53" width="3" height="1.2" fill="#000" /><rect x="321.5" y="52.5" width="2" height="2" fill="#FFFF00" stroke="#808000"/><rect x="325" y="53" width="3" height="1.2" fill="#000" /><rect x="313.5" y="57.5" width="2" height="2" fill="#FFFF00" stroke="#808000"/><rect x="317" y="58" width="3" height="1.2" fill="#000" /><rect x="321.5" y="57.5" width="2" height="2" fill="#FFFF00" stroke="#808000"/><rect x="325" y="58" width="3" height="1.2" fill="#000" /><rect x="313.5" y="62.5" width="2" height="2" fill="#FFFF00" stroke="#808000"/><rect x="317" y="63" width="3" height="1.2" fill="#000" /><rect x="321.5" y="62.5" width="2" height="2" fill="#FFFF00" stroke="#808000"/><rect x="325" y="63" width="3" height="1.2" fill="#000" />
<rect x="336" y="51" width="15" height="15" fill="#000" /><rect x="339" y="54" width="11" height="11" fill="#A8A69A" /><rect x="340" y="52" width="2" height="1" fill="#fff" /><rect x="339" y="54" width="3" height="2" fill="#FFFF00" /><rect x="339" y="57" width="3" height="2" fill="#FFFF00" /><rect x="339" y="60" width="3" height="2" fill="#FFFF00" /><rect x="339" y="63" width="3" height="2" fill="#FFFF00" /><rect x="344" y="52" width="2" height="1" fill="#fff" /><rect x="343" y="54" width="3" height="2" fill="#FFFF00" /><rect x="343" y="57" width="3" height="2" fill="#FFFF00" /><rect x="343" y="60" width="3" height="2" fill="#FFFF00" /><rect x="343" y="63" width="3" height="2" fill="#FFFF00" /><rect x="348" y="52" width="2" height="1" fill="#fff" /><rect x="347" y="54" width="3" height="2" fill="#FFFF00" /><rect x="347" y="57" width="3" height="2" fill="#FFFF00" /><rect x="347" y="60" width="3" height="2" fill="#FFFF00" /><rect x="347" y="63" width="3" height="2" fill="#FFFF00" /><rect x="337" y="55" width="1" height="2" fill="#fff" /><rect x="337" y="58" width="1" height="2" fill="#fff" /><rect x="337" y="61" width="1" height="2" fill="#fff" /><rect x="337" y="64" width="1" height="1" fill="#fff" />
<circle cx="373.5" cy="56.5" r="5" fill="#F8F6EE" stroke="#000" stroke-width="1" shape-rendering="auto"/><path d="M377.3,60.3 l1.5,1.5" fill="none" stroke="#555" stroke-width="1.2" shape-rendering="auto"/><path d="M379.0,62.0 l3.2,3.2" fill="none" stroke="#000" stroke-width="2.2" shape-rendering="auto" stroke-linecap="round"/><rect x="371.0" y="55.5" width="5" height="2" fill="#A00020" /><rect x="372.5" y="54.0" width="2" height="5" fill="#A00020" />
<circle cx="396.5" cy="56.5" r="5" fill="#F8F6EE" stroke="#000" stroke-width="1" shape-rendering="auto"/><path d="M400.3,60.3 l1.5,1.5" fill="none" stroke="#555" stroke-width="1.2" shape-rendering="auto"/><path d="M402.0,62.0 l3.2,3.2" fill="none" stroke="#000" stroke-width="2.2" shape-rendering="auto" stroke-linecap="round"/><rect x="394.0" y="55.5" width="5" height="2" fill="#A00020" />
<circle cx="421.5" cy="58.5" r="7.2" fill="#0018D8" shape-rendering="auto"/><path d="M419.5,52.5 l3,0 l1,2 l-1,3 l2,3 l1,3 l-3,2 l-1,-3 l-3,-3 l-1,-4 z" fill="#00C820" stroke="none" stroke-width="1" shape-rendering="auto"/><path d="M424.5,54.5 l2,1 l0,2 l-2,-1 z" fill="#00C820" stroke="none" stroke-width="1" shape-rendering="auto"/>
<path d="M444.5,51 v5 M444.5,61 v5 M437,58.5 h5 M447,58.5 h5" fill="none" stroke="#fff" stroke-width="1" transform="translate(1,1)"/><path d="M444.5,51 v5 M444.5,61 v5 M437,58.5 h5 M447,58.5 h5" fill="none" stroke="#ACA899" stroke-width="1" /><path d="M442,54 l2.5,2.5 l2.5,-2.5 M442,63 l2.5,-2.5 l2.5,2.5 M440,56 l2.5,2.5 l-2.5,2.5 M449,56 l-2.5,2.5 l2.5,2.5" fill="none" stroke="#ACA899" stroke-width="1" shape-rendering="auto"/>
<text x="576" y="64" fill="#fff" style="font-family:'Liberation Serif',serif;font-size:14.5px;font-weight:bold;">B</text><text x="575" y="63" fill="#ACA899" style="font-family:'Liberation Serif',serif;font-size:14.5px;font-weight:bold;">B</text><text x="600.5" y="64" fill="#fff" style="font-family:'Liberation Serif',serif;font-size:14.5px;font-weight:bold;font-style:italic;">I</text><text x="599.5" y="63" fill="#ACA899" style="font-family:'Liberation Serif',serif;font-size:14.5px;font-weight:bold;font-style:italic;">I</text><text x="621.5" y="63.5" fill="#fff" style="font-family:'Liberation Serif',serif;font-size:14px;font-weight:bold;">U</text><text x="620.5" y="62.5" fill="#ACA899" style="font-family:'Liberation Serif',serif;font-size:14px;font-weight:bold;">U</text><rect x="622" y="65" width="10" height="1" fill="#fff" /><rect x="621" y="64" width="10" height="1" fill="#ACA899" /><rect x="640" y="50" width="1" height="19" fill="#ACA899" /><rect x="641" y="50" width="1" height="19" fill="#fff" /><rect x="649.5" y="55" width="10" height="1" fill="#fff" /><rect x="648.5" y="54" width="10" height="1" fill="#ACA899" /><rect x="649.5" y="57" width="12" height="1" fill="#fff" /><rect x="648.5" y="56" width="12" height="1" fill="#ACA899" /><rect x="649.5" y="59" width="11" height="1" fill="#fff" /><rect x="648.5" y="58" width="11" height="1" fill="#ACA899" /><rect x="649.5" y="61" width="12" height="1" fill="#fff" /><rect x="648.5" y="60" width="12" height="1" fill="#ACA899" /><rect x="649.5" y="63" width="10" height="1" fill="#fff" /><rect x="648.5" y="62" width="10" height="1" fill="#ACA899" /><rect x="674.0" y="55" width="10" height="1" fill="#fff" /><rect x="673.0" y="54" width="10" height="1" fill="#ACA899" /><rect x="673.0" y="57" width="12" height="1" fill="#fff" /><rect x="672.0" y="56" width="12" height="1" fill="#ACA899" /><rect x="673.5" y="59" width="11" height="1" fill="#fff" /><rect x="672.5" y="58" width="11" height="1" fill="#ACA899" /><rect x="673.0" y="61" width="12" height="1" fill="#fff" /><rect x="672.0" y="60" width="12" height="1" fill="#ACA899" /><rect x="674.0" y="63" width="10" height="1" fill="#fff" /><rect x="673.0" y="62" width="10" height="1" fill="#ACA899" /><rect x="698.5" y="55" width="10" height="1" fill="#fff" /><rect x="697.5" y="54" width="10" height="1" fill="#ACA899" /><rect x="696.5" y="57" width="12" height="1" fill="#fff" /><rect x="695.5" y="56" width="12" height="1" fill="#ACA899" /><rect x="697.5" y="59" width="11" height="1" fill="#fff" /><rect x="696.5" y="58" width="11" height="1" fill="#ACA899" /><rect x="696.5" y="61" width="12" height="1" fill="#fff" /><rect x="695.5" y="60" width="12" height="1" fill="#ACA899" /><rect x="698.5" y="63" width="10" height="1" fill="#fff" /><rect x="697.5" y="62" width="10" height="1" fill="#ACA899" />
<path d="M15.5,88 l3,3.2 l8,-12" fill="none" stroke="#008000" stroke-width="2" shape-rendering="auto" stroke-linejoin="miter"/>
<rect x="41" y="80" width="9" height="8" fill="#008000" /><rect x="41.5" y="80.5" width="8" height="7" fill="none" stroke="#000"/><rect x="49" y="80" width="7" height="9" fill="#00A000" /><rect x="49.5" y="80.5" width="6" height="8" fill="none" stroke="#004000"/><rect x="43" y="81.5" width="5" height="1" fill="#fff" /><rect x="42" y="81.5" width="1" height="1" fill="#F00" /><rect x="43" y="83.5" width="5" height="1" fill="#fff" /><rect x="42" y="83.5" width="1" height="1" fill="#F00" /><rect x="43" y="85.5" width="5" height="1" fill="#fff" /><rect x="42" y="85.5" width="1" height="1" fill="#F00" /><rect x="51" y="82" width="3" height="3" fill="#fff" /><rect x="52" y="83" width="1" height="1" fill="#000" /><rect x="51" y="86" width="3" height="1" fill="#fff" /><rect x="48" y="89" width="5" height="3" fill="#000" /><rect x="49" y="89" width="1.5" height="2" fill="#FFFF00" /><rect x="51" y="89" width="1.5" height="2" fill="#FFFF00" />
<circle cx="212.5" cy="85.5" r="7.5" fill="#2A1CE0" shape-rendering="auto"/><circle cx="211.5" cy="84.5" r="5.5" fill="#3B2CF5" shape-rendering="auto"/><path d="M209.5,82.5 l6,6 M215.5,82.5 l-6,6" fill="none" stroke="#fff" stroke-width="2" shape-rendering="auto"/>
<rect x="0" y="99" width="22" height="1" fill="#fff" /><rect x="0" y="100" width="22" height="1" fill="#ACA899" /><rect x="0" y="102" width="22" height="1" fill="#fff" /><rect x="0" y="103" width="22" height="1" fill="#ACA899" /><path d="M8.5,109.5 l7,7 h-3 l2,4 l-1.5,1 l-2,-4 l-2.5,2.5 z" fill="#fff" stroke="#000" stroke-width="1" shape-rendering="auto"/><rect x="3" y="130" width="17" height="1" fill="#ACA899" /><rect x="3" y="131" width="17" height="1" fill="#fff" /><g transform="translate(1,1)"><rect x="3" y="144.5" width="9" height="1.5" fill="#fff" /><circle cx="15" cy="145" r="4" fill="#fff" shape-rendering="auto"/></g><rect x="3" y="144.5" width="9" height="1.5" fill="#ACA899" /><circle cx="15" cy="145" r="4" fill="#ACA899" shape-rendering="auto"/><g transform="translate(1,1)"><rect x="3" y="166.5" width="9" height="1.5" fill="#fff" /><rect x="12.5" y="163.5" width="7" height="7" fill="none" stroke="#fff"/></g><rect x="3" y="166.5" width="9" height="1.5" fill="#ACA899" /><rect x="12.5" y="163.5" width="7" height="7" fill="none" stroke="#ACA899"/><g transform="translate(1,1)"><circle cx="7" cy="189" r="4" fill="#fff" shape-rendering="auto"/><rect x="10" y="188.5" width="9" height="1.5" fill="#fff" /></g><circle cx="7" cy="189" r="4" fill="#ACA899" shape-rendering="auto"/><rect x="10" y="188.5" width="9" height="1.5" fill="#ACA899" /><g transform="translate(1,1)"><rect x="3" y="210.5" width="16" height="1.5" fill="#fff" /><circle cx="11" cy="211" r="4" fill="#fff" shape-rendering="auto"/></g><rect x="3" y="210.5" width="16" height="1.5" fill="#ACA899" /><circle cx="11" cy="211" r="4" fill="#ACA899" shape-rendering="auto"/><g transform="translate(1,1)"><rect x="3" y="232.5" width="16" height="1.5" fill="#fff" /><path d="M7,229 l8,8 M15,229 l-8,8" fill="none" stroke="#fff" stroke-width="1.5" shape-rendering="auto"/></g><rect x="3" y="232.5" width="16" height="1.5" fill="#ACA899" /><path d="M7,229 l8,8 M15,229 l-8,8" fill="none" stroke="#ACA899" stroke-width="1.5" shape-rendering="auto"/><rect x="3" y="247" width="17" height="1" fill="#ACA899" /><rect x="3" y="248" width="17" height="1" fill="#fff" /><g transform="translate(1,1)"><circle cx="10.5" cy="261" r="3.8" fill="none" stroke="#fff" stroke-width="1.2" shape-rendering="auto"/><rect x="6" y="267" width="2" height="1.5" fill="#fff" /><rect x="10" y="267" width="2" height="1.5" fill="#fff" /><rect x="14" y="267" width="2" height="1.5" fill="#fff" /></g><circle cx="10.5" cy="261" r="3.8" fill="none" stroke="#ACA899" stroke-width="1.2" shape-rendering="auto"/><rect x="6" y="267" width="2" height="1.5" fill="#ACA899" /><rect x="10" y="267" width="2" height="1.5" fill="#ACA899" /><rect x="14" y="267" width="2" height="1.5" fill="#ACA899" /><g transform="translate(1,1)"><rect x="4" y="276" width="1" height="14" fill="#fff" /><rect x="19" y="276" width="1" height="14" fill="#fff" /><circle cx="6.5" cy="279" r="2" fill="#fff" shape-rendering="auto"/><circle cx="6.5" cy="286" r="2" fill="#fff" shape-rendering="auto"/><circle cx="16.5" cy="278" r="2" fill="#fff" shape-rendering="auto"/><circle cx="16.5" cy="284" r="2" fill="#fff" shape-rendering="auto"/><circle cx="16.5" cy="289.5" r="2" fill="#fff" shape-rendering="auto"/></g><rect x="4" y="276" width="1" height="14" fill="#ACA899" /><rect x="19" y="276" width="1" height="14" fill="#ACA899" /><circle cx="6.5" cy="279" r="2" fill="#ACA899" shape-rendering="auto"/><circle cx="6.5" cy="286" r="2" fill="#ACA899" shape-rendering="auto"/><circle cx="16.5" cy="278" r="2" fill="#ACA899" shape-rendering="auto"/><circle cx="16.5" cy="284" r="2" fill="#ACA899" shape-rendering="auto"/><circle cx="16.5" cy="289.5" r="2" fill="#ACA899" shape-rendering="auto"/><rect x="3" y="296" width="17" height="1" fill="#ACA899" /><rect x="3" y="297" width="17" height="1" fill="#fff" /><path d="M5,310 h5 v-5 h6" fill="none" stroke="#0000C0" stroke-width="2" /><circle cx="5" cy="310" r="2" fill="#E00000" stroke="#000" stroke-width=".8" shape-rendering="auto"/><circle cx="17" cy="304.8" r="2" fill="#00D000" stroke="#000" stroke-width=".8" shape-rendering="auto"/><text x="2.5" y="318.5" style="font-family:'Liberation Sans',sans-serif;font-size:8px;font-weight:bold;" fill="#000" textLength="16" lengthAdjust="spacingAndGlyphs">NET</text><rect x="3" y="325" width="17" height="1" fill="#ACA899" /><rect x="3" y="326" width="17" height="1" fill="#fff" /><rect x="6" y="333" width="12" height="4" fill="#000" /><rect x="10.5" y="333" width="4" height="13" fill="#000" /><rect x="5" y="332" width="12" height="4" fill="#FF0000" /><rect x="9.5" y="332" width="4" height="13" fill="#FF0000" /><rect x="3" y="340" width="16" height="1" fill="#00E000" /><path d="M3,337.5 l4.5,3 l-4.5,3 z" fill="#00E000" stroke="none" stroke-width="1" /><rect x="0" y="372" width="23" height="1" fill="#ACA899" /><rect x="0" y="373" width="23" height="1" fill="#fff" /><rect x="3" y="353" width="12" height="9" fill="#0000E0" /><rect x="5.5" y="356" width="12" height="9" fill="#C000C0" /><rect x="7.5" y="359.5" width="11" height="8" fill="#ECE9D8" stroke="#000"/><rect x="8" y="360" width="10" height="1.5" fill="#000" /><rect x="10" y="363" width="3" height="2" fill="#000080" /><rect x="13" y="365" width="3" height="1.5" fill="#808080" />
<rect x="26" y="100" width="25" height="24" fill="#1E22E6" /><rect x="27" y="104" width="24" height="1" fill="#B0B0D0" /><rect x="28" y="102" width="5" height="4" fill="#22B222" /><rect x="29" y="106" width="3" height="1" fill="#22B222" /><rect x="39" y="102" width="5" height="4" fill="#22B222" /><rect x="40" y="106" width="3" height="1" fill="#22B222" /><rect x="30" y="106" width="1" height="8" fill="#D0D0E0" /><rect x="28" y="113" width="5" height="9" fill="#C82828" /><rect x="33" y="114" width="18" height="1" fill="#C8C8E0" /><rect x="33" y="120" width="18" height="1" fill="#C8C8E0" /><rect x="26" y="117" width="2" height="1" fill="#C8C8E0" /><rect x="39" y="113" width="5" height="3" fill="#C8B428" /><rect x="39" y="119" width="5" height="3" fill="#C8B428" />
<defs><pattern id="fdy" width="2" height="2" patternUnits="userSpaceOnUse"><rect width="2" height="2" fill="#FFFF00"/><rect width="1" height="1" fill="#FFFFE8"/><rect x="1" y="1" width="1" height="1" fill="#FFFFE8"/></pattern><pattern id="fdg" width="2" height="2" patternUnits="userSpaceOnUse"><rect width="2" height="2" fill="#C0C0C0"/><rect width="1" height="1" fill="#E8E8E8"/><rect x="1" y="1" width="1" height="1" fill="#E8E8E8"/></pattern></defs>
<path d="M35.5,147.5 V139 L37,136.5 H41.5 L43.5,138.5 H48.5 V147.5 Z" fill="url(#fdy)" stroke="#808080" stroke-width="1" shape-rendering="auto"/><path d="M36.5,147 V139.5 L37.5,137.5 H41" fill="none" stroke="#fff" stroke-width="1" shape-rendering="auto"/><path d="M36,148.5 H50 M49.5,139 V149" fill="none" stroke="#000" stroke-width="1.8" />
<path d="M35.5,167.5 V159 L37,156.5 H41.5 L43.5,158.5 H48.5 V167.5 Z" fill="url(#fdy)" stroke="#808080" stroke-width="1" shape-rendering="auto"/><path d="M36.5,167 V159.5 L37.5,157.5 H41" fill="none" stroke="#fff" stroke-width="1" shape-rendering="auto"/><path d="M36,168.5 H50 M49.5,159 V169" fill="none" stroke="#000" stroke-width="1.8" />
<path d="M35.5,187.5 V179 L37,176.5 H41.5 L43.5,178.5 H48.5 V187.5 Z" fill="url(#fdy)" stroke="#808080" stroke-width="1" shape-rendering="auto"/><path d="M36.5,187 V179.5 L37.5,177.5 H41" fill="none" stroke="#fff" stroke-width="1" shape-rendering="auto"/><path d="M36,188.5 H50 M49.5,179 V189" fill="none" stroke="#000" stroke-width="1.8" />
<path d="M35.5,201 V198.5 L37,196.5 H41 L42.5,198.5 H46.5 V201" fill="#FFFFE0" stroke="#808080" stroke-width="1" shape-rendering="auto"/><path d="M34.5,200.5 H45.5 L48.5,207.5 H37.5 Z" fill="url(#fdy)" stroke="#808080" stroke-width="1" shape-rendering="auto"/><path d="M37,208.5 H49.5 L46.5,201" fill="none" stroke="#000" stroke-width="1.6" shape-rendering="auto"/>
<path d="M55.5,223.5 V215 L57,212.5 H61.5 L63.5,214.5 H68.5 V223.5 Z" fill="url(#fdy)" stroke="#808080" stroke-width="1" shape-rendering="auto"/><path d="M56.5,223 V215.5 L57.5,213.5 H61" fill="none" stroke="#fff" stroke-width="1" shape-rendering="auto"/><path d="M56,224.5 H70 M69.5,215 V225" fill="none" stroke="#000" stroke-width="1.8" />
<path d="M55.5,239.5 V231 L57,228.5 H61.5 L63.5,230.5 H68.5 V239.5 Z" fill="url(#fdy)" stroke="#808080" stroke-width="1" shape-rendering="auto"/><path d="M56.5,239 V231.5 L57.5,229.5 H61" fill="none" stroke="#fff" stroke-width="1" shape-rendering="auto"/><path d="M56,240.5 H70 M69.5,231 V241" fill="none" stroke="#000" stroke-width="1.8" />
<path d="M55.5,255.5 V247 L57,244.5 H61.5 L63.5,246.5 H68.5 V255.5 Z" fill="url(#fdy)" stroke="#808080" stroke-width="1" shape-rendering="auto"/><path d="M56.5,255 V247.5 L57.5,245.5 H61" fill="none" stroke="#fff" stroke-width="1" shape-rendering="auto"/><path d="M56,256.5 H70 M69.5,247 V257" fill="none" stroke="#000" stroke-width="1.8" />
<path d="M35.5,275.5 V267 L37,264.5 H41.5 L43.5,266.5 H48.5 V275.5 Z" fill="url(#fdy)" stroke="#808080" stroke-width="1" shape-rendering="auto"/><path d="M36.5,275 V267.5 L37.5,265.5 H41" fill="none" stroke="#fff" stroke-width="1" shape-rendering="auto"/><path d="M36,276.5 H50 M49.5,267 V277" fill="none" stroke="#000" stroke-width="1.8" />
<path d="M35.5,295.5 V287 L37,284.5 H41.5 L43.5,286.5 H48.5 V295.5 Z" fill="url(#fdg)" stroke="#808080" stroke-width="1" shape-rendering="auto"/><path d="M36.5,295 V287.5 L37.5,285.5 H41" fill="none" stroke="#fff" stroke-width="1" shape-rendering="auto"/><path d="M36,296.5 H50 M49.5,287 V297" fill="none" stroke="#000" stroke-width="1.8" />
<path d="M35.5,315.5 V307 L37,304.5 H41.5 L43.5,306.5 H48.5 V315.5 Z" fill="url(#fdg)" stroke="#808080" stroke-width="1" shape-rendering="auto"/><path d="M36.5,315 V307.5 L37.5,305.5 H41" fill="none" stroke="#fff" stroke-width="1" shape-rendering="auto"/><path d="M36,316.5 H50 M49.5,307 V317" fill="none" stroke="#000" stroke-width="1.8" />
<path d="M35.5,335.5 V327 L37,324.5 H41.5 L43.5,326.5 H48.5 V335.5 Z" fill="url(#fdy)" stroke="#808080" stroke-width="1" shape-rendering="auto"/><path d="M36.5,335 V327.5 L37.5,325.5 H41" fill="none" stroke="#fff" stroke-width="1" shape-rendering="auto"/><path d="M36,336.5 H50 M49.5,327 V337" fill="none" stroke="#000" stroke-width="1.8" />
<path d="M43.5,211 V252.5 M43.5,220.5 H56 M43.5,236.5 H56 M43.5,252.5 H56" fill="none" stroke="#0000C0" stroke-dasharray="1 1"/>
<defs><linearGradient id="sf1" x1="0" y1="0" x2="1" y2="1"><stop offset="0" stop-color="#FFF68C"/><stop offset="0.45" stop-color="#FFF68C"/><stop offset="1" stop-color="#FFD49C"/></linearGradient></defs><rect x="1183" y="124" width="32" height="6" fill="#C4C4CC" /><path d="M1183.5,150.5 V129.5 L1187.5,124.5 H1196.5 L1200.5,128.5 H1212.5 L1214.5,130.5 V149.5 L1213.5,150.5 Z" fill="url(#sf1)" stroke="#7C7C00" stroke-width="1" shape-rendering="auto"/><path d="M1184.5,130 H1199" fill="none" stroke="#FFFFD8" stroke-width="1" shape-rendering="auto"/><path d="M1184,150 H1214 M1214,132 V150" fill="none" stroke="#7C7C00" stroke-width="1.6" shape-rendering="auto"/><defs><linearGradient id="sf2" x1="0" y1="0" x2="1" y2="1"><stop offset="0" stop-color="#FFF68C"/><stop offset="0.45" stop-color="#FFF68C"/><stop offset="1" stop-color="#FFD49C"/></linearGradient></defs><rect x="1228" y="124" width="32" height="6" fill="#C4C4CC" /><path d="M1228.5,150.5 V129.5 L1232.5,124.5 H1241.5 L1245.5,128.5 H1257.5 L1259.5,130.5 V149.5 L1258.5,150.5 Z" fill="url(#sf2)" stroke="#7C7C00" stroke-width="1" shape-rendering="auto"/><path d="M1229.5,130 H1244" fill="none" stroke="#FFFFD8" stroke-width="1" shape-rendering="auto"/><path d="M1229,150 H1259 M1259,132 V150" fill="none" stroke="#7C7C00" stroke-width="1.6" shape-rendering="auto"/><defs><linearGradient id="sf3" x1="0" y1="0" x2="1" y2="1"><stop offset="0" stop-color="#FFF68C"/><stop offset="0.45" stop-color="#FFF68C"/><stop offset="1" stop-color="#FFD49C"/></linearGradient></defs><rect x="1183" y="169" width="32" height="6" fill="#C4C4CC" /><path d="M1183.5,195.5 V174.5 L1187.5,169.5 H1196.5 L1200.5,173.5 H1212.5 L1214.5,175.5 V194.5 L1213.5,195.5 Z" fill="url(#sf3)" stroke="#7C7C00" stroke-width="1" shape-rendering="auto"/><path d="M1184.5,175 H1199" fill="none" stroke="#FFFFD8" stroke-width="1" shape-rendering="auto"/><path d="M1184,195 H1214 M1214,177 V195" fill="none" stroke="#7C7C00" stroke-width="1.6" shape-rendering="auto"/><defs><linearGradient id="sf4" x1="0" y1="0" x2="1" y2="1"><stop offset="0" stop-color="#FFF68C"/><stop offset="0.45" stop-color="#FFF68C"/><stop offset="1" stop-color="#FFD49C"/></linearGradient></defs><rect x="1228" y="169" width="32" height="6" fill="#C4C4CC" /><path d="M1228.5,195.5 V174.5 L1232.5,169.5 H1241.5 L1245.5,173.5 H1257.5 L1259.5,175.5 V194.5 L1258.5,195.5 Z" fill="url(#sf4)" stroke="#7C7C00" stroke-width="1" shape-rendering="auto"/><path d="M1229.5,175 H1244" fill="none" stroke="#FFFFD8" stroke-width="1" shape-rendering="auto"/><path d="M1229,195 H1259 M1259,177 V195" fill="none" stroke="#7C7C00" stroke-width="1.6" shape-rendering="auto"/><defs><linearGradient id="sf5" x1="0" y1="0" x2="1" y2="1"><stop offset="0" stop-color="#FFF68C"/><stop offset="0.45" stop-color="#FFF68C"/><stop offset="1" stop-color="#FFD49C"/></linearGradient></defs><rect x="1183" y="214" width="32" height="6" fill="#C4C4CC" /><path d="M1183.5,240.5 V219.5 L1187.5,214.5 H1196.5 L1200.5,218.5 H1212.5 L1214.5,220.5 V239.5 L1213.5,240.5 Z" fill="url(#sf5)" stroke="#7C7C00" stroke-width="1" shape-rendering="auto"/><path d="M1184.5,220 H1199" fill="none" stroke="#FFFFD8" stroke-width="1" shape-rendering="auto"/><path d="M1184,240 H1214 M1214,222 V240" fill="none" stroke="#7C7C00" stroke-width="1.6" shape-rendering="auto"/><defs><linearGradient id="sf6" x1="0" y1="0" x2="1" y2="1"><stop offset="0" stop-color="#B8B8FF"/><stop offset="0.45" stop-color="#B8B8FF"/><stop offset="1" stop-color="#C8E4FF"/></linearGradient></defs><rect x="1228" y="214" width="32" height="6" fill="#C4C4CC" /><path d="M1228.5,240.5 V219.5 L1232.5,214.5 H1241.5 L1245.5,218.5 H1257.5 L1259.5,220.5 V239.5 L1258.5,240.5 Z" fill="url(#sf6)" stroke="#38388C" stroke-width="1" shape-rendering="auto"/><path d="M1229.5,220 H1244" fill="none" stroke="#E8E8FF" stroke-width="1" shape-rendering="auto"/><path d="M1229,240 H1259 M1259,222 V240" fill="none" stroke="#38388C" stroke-width="1.6" shape-rendering="auto"/><circle cx="1239" cy="227" r="5.5" fill="none" stroke="#8890B8" stroke-width="1.3" shape-rendering="auto" opacity=".8"/><path d="M1243,231 l8,8" fill="none" stroke="#8890B8" stroke-width="2.2" shape-rendering="auto" opacity=".8"/><defs><linearGradient id="sf7" x1="0" y1="0" x2="1" y2="1"><stop offset="0" stop-color="#B8B8FF"/><stop offset="0.45" stop-color="#B8B8FF"/><stop offset="1" stop-color="#C8E4FF"/></linearGradient></defs><rect x="1183" y="259" width="32" height="6" fill="#C4C4CC" /><path d="M1183.5,285.5 V264.5 L1187.5,259.5 H1196.5 L1200.5,263.5 H1212.5 L1214.5,265.5 V284.5 L1213.5,285.5 Z" fill="url(#sf7)" stroke="#38388C" stroke-width="1" shape-rendering="auto"/><path d="M1184.5,265 H1199" fill="none" stroke="#E8E8FF" stroke-width="1" shape-rendering="auto"/><path d="M1184,285 H1214 M1214,267 V285" fill="none" stroke="#38388C" stroke-width="1.6" shape-rendering="auto"/><circle cx="1194" cy="272" r="5.5" fill="none" stroke="#8890B8" stroke-width="1.3" shape-rendering="auto" opacity=".8"/><path d="M1198,276 l8,8" fill="none" stroke="#8890B8" stroke-width="2.2" shape-rendering="auto" opacity=".8"/><path d="M1190.5,139.5 L1198.5,131.5 L1206.5,139.5 Z" fill="#C0C0FF" stroke="#000" stroke-width="1.2" shape-rendering="auto"/><rect x="1192.5" y="139.5" width="11" height="7" fill="#C0C0FF" stroke="#000" stroke-width="1.2"/><rect x="1202.5" y="132.5" width="2" height="5" fill="#C0C0FF" stroke="#000" stroke-width="1"/><path d="M1237.5,134 V143.5 H1253" fill="none" stroke="#000" stroke-width="1.6" /><path d="M1233.5,138 L1237.5,133.5 L1241.5,138" fill="none" stroke="#000" stroke-width="1.6" shape-rendering="auto"/><rect x="1253" y="102" width="11" height="11" fill="#ECE9D8" /><rect x="1253" y="102" width="11" height="1" fill="#fff" /><rect x="1253" y="102" width="1" height="11" fill="#fff" /><rect x="1253" y="112" width="11" height="1" fill="#716F64" /><rect x="1263" y="102" width="1" height="11" fill="#716F64" /><rect x="1254" y="111" width="9" height="1" fill="#ACA899" /><rect x="1262" y="103" width="1" height="9" fill="#ACA899" /><rect x="1266" y="102" width="11" height="11" fill="#ECE9D8" /><rect x="1266" y="102" width="11" height="1" fill="#fff" /><rect x="1266" y="102" width="1" height="11" fill="#fff" /><rect x="1266" y="112" width="11" height="1" fill="#716F64" /><rect x="1276" y="102" width="1" height="11" fill="#716F64" /><rect x="1267" y="111" width="9" height="1" fill="#ACA899" /><rect x="1275" y="103" width="1" height="9" fill="#ACA899" /><rect x="1255.5" y="104.5" width="5" height="5" fill="none" stroke="#ACA899"/><rect x="1255" y="104" width="6" height="2" fill="#ACA899" /><path d="M1269,105 l5,5 M1274,105 l-5,5" fill="none" stroke="#000" stroke-width="1.6" shape-rendering="auto"/>
<path d="M1150,109 L1153.5,105 L1157,109 Z" fill="#000" stroke="none" stroke-width="1" shape-rendering="auto"/><path d="M1150,604 L1153.5,608 L1157,604 Z" fill="#000" stroke="none" stroke-width="1" shape-rendering="auto"/><path d="M210,619 L206,622.5 L210,626 Z" fill="#000" stroke="none" stroke-width="1" shape-rendering="auto"/><path d="M1135,619 L1139,622.5 L1135,626 Z" fill="#000" stroke="none" stroke-width="1" shape-rendering="auto"/><path d="M486.5,682 L490.5,678 L494.5,682" fill="none" stroke="#4D6185" stroke-width="2.2" shape-rendering="auto"/><path d="M486.5,943 L490.5,947 L494.5,943" fill="none" stroke="#4D6185" stroke-width="2.2" shape-rendering="auto"/><rect x="487.5" y="851.5" width="7" height="1" fill="#EEF4FE" /><rect x="488.5" y="852.5" width="7" height="1" fill="#8CB0F8" /><rect x="487.5" y="853.5" width="7" height="1" fill="#EEF4FE" /><rect x="488.5" y="854.5" width="7" height="1" fill="#8CB0F8" /><rect x="487.5" y="855.5" width="7" height="1" fill="#EEF4FE" /><rect x="488.5" y="856.5" width="7" height="1" fill="#8CB0F8" /><rect x="487.5" y="857.5" width="7" height="1" fill="#EEF4FE" /><rect x="488.5" y="858.5" width="7" height="1" fill="#8CB0F8" /><path d="M1112.5,712 L1116.5,708 L1120.5,712" fill="none" stroke="#4D6185" stroke-width="2.2" shape-rendering="auto"/><path d="M1112.5,942 L1116.5,946 L1120.5,942" fill="none" stroke="#4D6185" stroke-width="2.2" shape-rendering="auto"/><rect x="1113.5" y="736.5" width="7" height="1" fill="#EEF4FE" /><rect x="1114.5" y="737.5" width="7" height="1" fill="#8CB0F8" /><rect x="1113.5" y="738.5" width="7" height="1" fill="#EEF4FE" /><rect x="1114.5" y="739.5" width="7" height="1" fill="#8CB0F8" /><rect x="1113.5" y="740.5" width="7" height="1" fill="#EEF4FE" /><rect x="1114.5" y="741.5" width="7" height="1" fill="#8CB0F8" /><rect x="1113.5" y="742.5" width="7" height="1" fill="#EEF4FE" /><rect x="1114.5" y="743.5" width="7" height="1" fill="#8CB0F8" /><rect x="1136" y="709.5" width="10" height="2.5" fill="#000" /><rect x="1139.8" y="705.5" width="2.5" height="11.5" fill="#000" /><rect x="1136" y="734.5" width="10" height="2.5" fill="#000" /><path d="M516.5,713.5 H526.5 L521.5,718.5 Z" fill="#A6CAF0" stroke="#202060" stroke-width="1.3" shape-rendering="auto"/></svg>
<div class="t" style="left:1186px;top:177.81px;font-size:10.5px;letter-spacing:-0.288px;">elec...</div>
<div class="t" style="left:1228.8px;top:177.81px;font-size:10.5px;letter-spacing:-0.462px;">mech...</div>
<div class="t" style="left:1185.4px;top:222.61px;font-size:10.5px;letter-spacing:-0.559px;">project</div>
<div class="t" style="left:1231px;top:222.61px;font-size:10.5px;letter-spacing:-0.284px;">symio</div>
<div class="t" style="left:1184.4px;top:268.11px;font-size:10.5px;letter-spacing:-0.561px;">anno...</div>
</body></html>
